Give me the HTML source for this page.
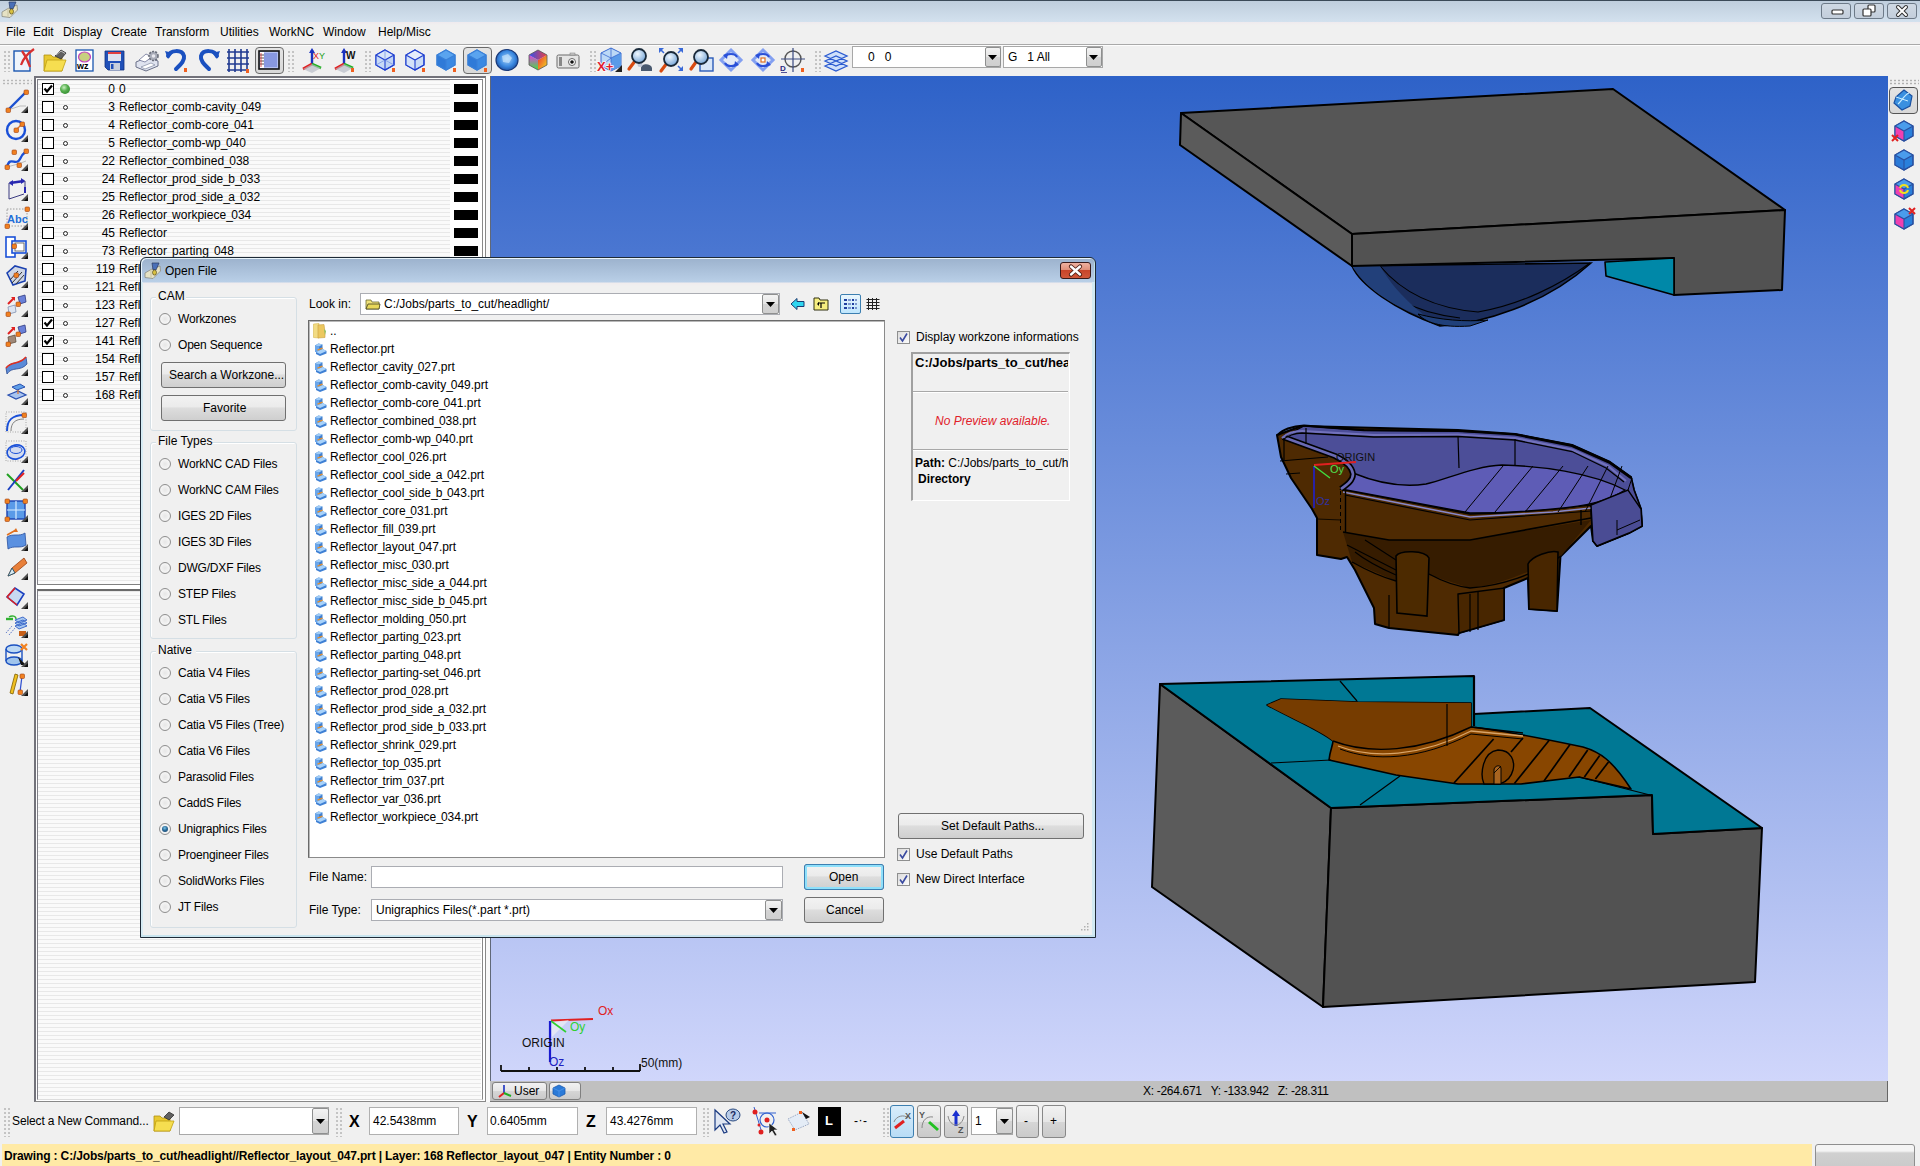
<!DOCTYPE html><html><head><meta charset="utf-8"><style>
*{margin:0;padding:0;box-sizing:border-box}
html,body{width:1920px;height:1166px;overflow:hidden;background:#f0f0f0;font-family:"Liberation Sans",sans-serif;font-size:12px;color:#000}
div{position:absolute}
.t{white-space:pre;line-height:14px;font-size:12px}
.b{font-weight:bold}
svg{position:absolute;overflow:visible}

.stripe{background:repeating-linear-gradient(#e8e8e8 0,#e8e8e8 1px,#fafafa 1px,#fafafa 4px)}
.cb{width:12px;height:12px;border:1.5px solid #000;background:#fff}

.btn{border:1px solid #707070;border-radius:3px;background:linear-gradient(#f2f2f2 0%,#ebebeb 45%,#dddddd 50%,#cfcfcf 100%);}
.inp{background:#fff;border:1px solid #abadb3;border-top-color:#abadb3}
.rad{width:13px;height:13px;border-radius:50%;border:1px solid #8f8f8f;background:radial-gradient(circle at 50% 50%,#e6e6e6 0,#f4f4f4 60%,#dcdcdc 100%)}
.grp{border:1px solid #d5dfe5;border-radius:3px;box-shadow:inset 1px 1px 0 #fff}
.chk{width:13px;height:13px;border:1px solid #8e8f8f;background:linear-gradient(135deg,#dcdcdc,#fbfbfb)}
</style></head><body><div style="left:0px;top:0px;width:1920px;height:1px;background:#3b4a58"></div>
<div style="left:0px;top:1px;width:1920px;height:21px;background:linear-gradient(#bfcedd,#d3e1ee)"></div>
<div style="left:0px;top:22px;width:1920px;height:3px;background:linear-gradient(#efeaee,#f0f0f0)"></div>
<div style="left:1821px;top:3px;width:30px;height:16px;border:1px solid #6d7a88;border-radius:3px;background:linear-gradient(#cfd9e4,#c3cedb)"></div>
<div style="left:1854px;top:3px;width:30px;height:16px;border:1px solid #6d7a88;border-radius:3px;background:linear-gradient(#cfd9e4,#c3cedb)"></div>
<div style="left:1887px;top:3px;width:30px;height:16px;border:1px solid #6d7a88;border-radius:3px;background:linear-gradient(#cfd9e4,#c3cedb)"></div>
<svg style="left:0;top:0" width="1920" height="22"><rect x="1832" y="10" width="11" height="4" rx="1" fill="#fff" stroke="#333" stroke-width="1.2"/><rect x="1868" y="5" width="7" height="7" rx="1" fill="#fff" stroke="#333" stroke-width="1.2"/><rect x="1863" y="9" width="8" height="7" rx="1" fill="#fff" stroke="#333" stroke-width="1.2"/><path d="M1898 7 L1906 15 M1906 7 L1898 15" stroke="#333" stroke-width="4" stroke-linecap="round"/><path d="M1898 7 L1906 15 M1906 7 L1898 15" stroke="#fff" stroke-width="2" stroke-linecap="round"/></svg>
<svg style="left:0px;top:0px" width="20" height="20"><path d="M2 12 L8 8.5 L17 5 L17.5 10 L10 17.5 L2 16.5Z" fill="#e6e2c4" stroke="#8a8a80" stroke-width="0.8"/><path d="M8 8.5 L8 16.5" stroke="#c8c2a0" stroke-width="1"/><path d="M9 2 L16 2 L13 9 L12 8.5 L10 9Z" fill="#4a70b8" stroke="#2a3a60" stroke-width="0.7"/><ellipse cx="11.5" cy="11.5" rx="2" ry="2.6" fill="#d8c040" stroke="#403810" stroke-width="0.6"/></svg>
<div class="t" style="left:6px;top:25px;">File</div>
<div class="t" style="left:33px;top:25px;">Edit</div>
<div class="t" style="left:63px;top:25px;">Display</div>
<div class="t" style="left:111px;top:25px;">Create</div>
<div class="t" style="left:155px;top:25px;">Transform</div>
<div class="t" style="left:220px;top:25px;">Utilities</div>
<div class="t" style="left:269px;top:25px;">WorkNC</div>
<div class="t" style="left:323px;top:25px;">Window</div>
<div class="t" style="left:378px;top:25px;">Help/Misc</div>
<div style="left:0px;top:44px;width:1920px;height:1px;background:#a9a9a9"></div>
<div style="left:0px;top:45px;width:1920px;height:1px;background:#fdfdfd"></div>
<div style="left:2px;top:1144px;width:1810px;height:22px;background:#ffeaa6"></div>
<div class="t b" style="left:4px;top:1149px;letter-spacing:-0.14px">Drawing : C:/Jobs/parts_to_cut/headlight//Reflector_layout_047.prt | Layer: 168 Reflector_layout_047 | Entity Number : 0</div>
<div style="left:1815px;top:1144px;width:100px;height:30px;border:1px solid #8e8e8e;border-radius:3px;background:linear-gradient(#f4f4f4 0,#f4f4f4 6px,#d0d0d0 8px,#c8c8c8)"></div>
<div style="left:3px;top:50px;width:8px;height:22px;background:radial-gradient(circle,#b4b4b4 0.6px,transparent 1px) 0 0/4px 4px"></div>
<div style="left:287px;top:50px;width:8px;height:22px;background:radial-gradient(circle,#b4b4b4 0.6px,transparent 1px) 0 0/4px 4px"></div>
<div style="left:364px;top:50px;width:8px;height:22px;background:radial-gradient(circle,#b4b4b4 0.6px,transparent 1px) 0 0/4px 4px"></div>
<div style="left:589px;top:50px;width:8px;height:22px;background:radial-gradient(circle,#b4b4b4 0.6px,transparent 1px) 0 0/4px 4px"></div>
<div style="left:814px;top:50px;width:8px;height:22px;background:radial-gradient(circle,#b4b4b4 0.6px,transparent 1px) 0 0/4px 4px"></div>
<div style="left:255px;top:47px;width:29px;height:27px;border:1px solid #6a6a6a;border-radius:4px;background:linear-gradient(#e4e4e4,#d8d8d8)"></div>
<div style="left:463px;top:47px;width:29px;height:27px;border:1px solid #6a6a6a;border-radius:4px;background:linear-gradient(#e4e4e4,#d8d8d8)"></div>
<svg style="left:11.0px;top:47.0px" width="26" height="26"><rect x="3" y="4" width="16" height="20" fill="#eef4fb" stroke="#1a56b0" stroke-width="1.4"/><path d="M10 18 C12 12, 16 7, 23 2 M11 4 C14 8, 17 13, 19 20" stroke="#d83030" stroke-width="2.2" fill="none"/></svg>
<svg style="left:42.0px;top:48.0px" width="26" height="26"><path d="M2 7 L9 7 L11 9 L20 9 L20 23 L2 23Z" fill="#e8c830" stroke="#b09010" stroke-width="0.8"/><path d="M5 12 L24 12 L20 23 L2 23Z" fill="#f6de50" stroke="#c0a010" stroke-width="0.8"/><path d="M13 8 L19 2 L24 5 L19 11Z" fill="#606060" stroke="#303030" stroke-width="0.8"/><path d="M14 7 L19 3 L23 5.5" stroke="#c0c0c0" stroke-width="1" fill="none"/></svg>
<svg style="left:72.0px;top:47.0px" width="26" height="26"><rect x="4" y="3" width="17" height="21" fill="#fff" stroke="#1a56b0" stroke-width="1.3"/><ellipse cx="12.5" cy="10" rx="6" ry="5" fill="#c8d080" stroke="#c040c0" stroke-width="1.2"/><text x="5" y="22" font-family="Liberation Sans" font-weight="bold" font-size="9" fill="#000">wz</text></svg>
<svg style="left:102.0px;top:47.0px" width="26" height="26"><path d="M3 4 L22 4 L22 23 L6 23 L3 20Z" fill="#2050b8" stroke="#103080" stroke-width="0.8"/><rect x="6" y="5" width="13" height="9" fill="#dde2ee"/><rect x="6" y="5" width="13" height="2" fill="#e04040"/><rect x="8" y="16" width="10" height="7" fill="#c8d0dc"/><rect x="9" y="17" width="2.5" height="5" fill="#2050b8"/></svg>
<svg style="left:134.0px;top:48.0px" width="26" height="26"><path d="M2 14 L14 9 L24 13 L24 18 L12 23 L2 19Z" fill="#dfe3ef" stroke="#6a7088" stroke-width="1"/><path d="M5 12 L12 6 L18 9 L11 14Z" fill="#fff" stroke="#7a80a0" stroke-width="0.9"/><circle cx="19.5" cy="8" r="4.5" fill="#a8acb8" stroke="#6a6e7a" stroke-width="1.6" stroke-dasharray="2 1.2"/><circle cx="19.5" cy="8" r="1.8" fill="#e8e8ee"/><path d="M7 19 L17 15 L21 17 L11 21Z" fill="#fff" stroke="#8088a0" stroke-width="0.7"/></svg>
<svg style="left:164.0px;top:47.0px" width="26" height="26"><path d="M4 9 C6 3, 18 2, 20 9 C21 14, 16 18, 12 22" stroke="#1a50c0" stroke-width="4" fill="none" stroke-linecap="round"/><path d="M1 4 L9 6 L4 12Z" fill="#1a50c0"/><rect x="20" y="21" width="3" height="4" fill="#f06020"/></svg>
<svg style="left:195.0px;top:47.0px" width="26" height="26"><path d="M22 9 C20 3, 8 2, 6 9 C5 14, 10 18, 14 22" stroke="#1a50c0" stroke-width="4" fill="none" stroke-linecap="round"/><path d="M25 4 L17 6 L22 12Z" fill="#1a50c0"/></svg>
<svg style="left:225.0px;top:47.0px" width="26" height="26"><path d="M2 5 H24 M2 11 H24 M2 17 H24 M2 23 H24 M4 2 V25 M10 2 V25 M16 2 V25 M22 2 V25" stroke="#203a90" stroke-width="1.6"/><rect x="21" y="22" width="3" height="4" fill="#f06020"/></svg>
<svg style="left:256.0px;top:47.0px" width="26" height="26"><rect x="3" y="4" width="20" height="18" fill="#b4c0f0" stroke="#111" stroke-width="1.6"/><rect x="8" y="6" width="13" height="14" fill="#8898e0"/><rect x="4" y="5" width="4" height="16" fill="#fff"/><path d="M4 8 H8 M4 11 H8 M4 14 H8 M4 17 H8" stroke="#222" stroke-width="0.8"/><path d="M5 6 V20" stroke="#e03030" stroke-width="0.8"/></svg>
<svg style="left:299.0px;top:47.0px" width="26" height="26"><path d="M13 17 L13 3" stroke="#1a30c0" stroke-width="2.4"/><path d="M13 1 L10 6 L16 6Z" fill="#1a30c0"/><path d="M13 17 L4 22" stroke="#e02020" stroke-width="2.6"/><path d="M13 17 L22 21" stroke="#20b020" stroke-width="2.6"/><path d="M4 22 L13 26 L22 21 L13 17Z" fill="#b8bcc8" opacity="0.7"/><text x="14" y="12" font-family="Liberation Sans" font-size="9" fill="#e02020">X</text><text x="20" y="12" font-family="Liberation Sans" font-size="9" fill="#20a020">Y</text></svg>
<svg style="left:331.0px;top:47.0px" width="26" height="26"><path d="M13 17 L13 3" stroke="#1a30c0" stroke-width="2.4"/><path d="M13 1 L10 6 L16 6Z" fill="#1a30c0"/><path d="M13 17 L4 22" stroke="#e02020" stroke-width="2.6"/><path d="M13 17 L22 21" stroke="#20b020" stroke-width="2.6"/><path d="M4 22 L13 26 L22 21 L13 17Z" fill="#b8bcc8" opacity="0.7"/><text x="15" y="12" font-family="Liberation Sans" font-weight="bold" font-size="10" fill="#111">W</text><rect x="20" y="21" width="3" height="4" fill="#f06020"/></svg>
<svg style="left:372.0px;top:47.0px" width="26" height="26"><path d="M13 3 L22 8 L22 18 L13 23 L4 18 L4 8Z" fill="#c0d4f4" stroke="#2040d0" stroke-width="1.2"/><path d="M13 3 L22 8 L13 13 L4 8Z" fill="#d8e6fa"/><path d="M4 8 L13 13 L13 23 L4 18Z" fill="#c8daf6"/><path d="M13 3 L22 8 L22 18 L13 23 L4 18 L4 8Z M4 8 L13 13 L22 8 M13 13 L13 23" fill="none" stroke="#2040d0" stroke-width="1.1"/><path d="M13 13 L13 3 M4 18 L13 13 M22 18 L13 13" stroke="#6080e0" stroke-width="0.6"/><rect x="20" y="21" width="3" height="4" fill="#f06020"/></svg>
<svg style="left:402.0px;top:47.0px" width="26" height="26"><path d="M13 3 L22 8 L22 18 L13 23 L4 18 L4 8Z" fill="#cadcf6" stroke="#2040d0" stroke-width="1.2"/><path d="M13 3 L22 8 L13 13 L4 8Z" fill="#e6eefb"/><path d="M4 8 L13 13 L13 23 L4 18Z" fill="#d4e2f8"/><path d="M13 3 L22 8 L22 18 L13 23 L4 18 L4 8Z M4 8 L13 13 L22 8 M13 13 L13 23" fill="none" stroke="#2040d0" stroke-width="1.1"/><rect x="20" y="21" width="3" height="4" fill="#f06020"/></svg>
<svg style="left:433.0px;top:47.0px" width="26" height="26"><path d="M13 3 L22 8 L22 18 L13 23 L4 18 L4 8Z" fill="#3a88e2" stroke="#3a80d8" stroke-width="1.2"/><path d="M13 3 L22 8 L13 13 L4 8Z" fill="#5aa4ef"/><path d="M4 8 L13 13 L13 23 L4 18Z" fill="#2f7ad8"/><path d="M13 3 L22 8 L22 18 L13 23 L4 18 L4 8Z M4 8 L13 13 L22 8 M13 13 L13 23" fill="none" stroke="#3a80d8" stroke-width="1.1"/><rect x="20" y="21" width="3" height="4" fill="#f06020"/></svg>
<svg style="left:464.0px;top:47.0px" width="26" height="26"><path d="M13 3 L22 8 L22 18 L13 23 L4 18 L4 8Z" fill="#3a88e2" stroke="#3a80d8" stroke-width="1.2"/><path d="M13 3 L22 8 L13 13 L4 8Z" fill="#5aa4ef"/><path d="M4 8 L13 13 L13 23 L4 18Z" fill="#2f7ad8"/><path d="M13 3 L22 8 L22 18 L13 23 L4 18 L4 8Z M4 8 L13 13 L22 8 M13 13 L13 23" fill="none" stroke="#3a80d8" stroke-width="1.1"/><rect x="20" y="21" width="3" height="4" fill="#f06020"/></svg>
<svg style="left:494.0px;top:47.0px" width="26" height="26"><defs><radialGradient id="sg" cx="50%" cy="45%" r="60%"><stop offset="0" stop-color="#a8d4fa"/><stop offset="0.6" stop-color="#3a88e0"/><stop offset="1" stop-color="#1a4a9a"/></radialGradient></defs><ellipse cx="13" cy="13" rx="11" ry="10.5" fill="url(#sg)" stroke="#1a3a7a" stroke-width="1.2"/><path d="M8 9 L14 7 L18 11 L15 16 L9 15Z" fill="#c8e4fc" opacity="0.7"/></svg>
<svg style="left:525.0px;top:47.0px" width="26" height="26"><defs><linearGradient id="cg1" x1="0" y1="0" x2="0" y2="1"><stop offset="0" stop-color="#e040e0"/><stop offset="1" stop-color="#40e040"/></linearGradient><linearGradient id="cg2" x1="0" y1="0" x2="1" y2="1"><stop offset="0" stop-color="#f03030"/><stop offset="1" stop-color="#f0e020"/></linearGradient><linearGradient id="cg3" x1="0" y1="0" x2="1" y2="0"><stop offset="0" stop-color="#3050f0"/><stop offset="1" stop-color="#f04040"/></linearGradient></defs><path d="M13 13 L22 8 L22 18 L13 23Z" fill="url(#cg2)"/><path d="M4 8 L13 13 L13 23 L4 18Z" fill="url(#cg1)"/><path d="M13 3 L22 8 L13 13 L4 8Z" fill="url(#cg3)"/><path d="M13 3 L22 8 L22 18 L13 23 L4 18 L4 8Z" fill="none" stroke="#555" stroke-width="0.8"/></svg>
<svg style="left:555.0px;top:48.0px" width="26" height="26"><rect x="2" y="7" width="22" height="13" rx="1.5" fill="#e4e4e4" stroke="#6a6a6a" stroke-width="1"/><rect x="4" y="9" width="3" height="9" fill="#888"/><circle cx="17" cy="14" r="3.5" fill="#fff" stroke="#666" stroke-width="1"/><circle cx="17" cy="14" r="1.8" fill="#111"/><rect x="15" y="5" width="5" height="2" fill="#ccc" stroke="#777" stroke-width="0.5"/></svg>
<svg style="left:598.0px;top:47.0px" width="26" height="26"><path d="M13 1 L23 6 L23 19 L13 24 L3 19 L3 6Z" fill="#bcd8f6" stroke="#3a6ad0" stroke-width="1"/><path d="M13 11 L23 6 L23 19 L13 24Z" fill="#5a9ae8"/><path d="M3 6 L13 11 L23 6 M13 11 V24 M13 1 V11 M3 19 L13 11" stroke="#3a6ad0" stroke-width="0.8" fill="none"/><path d="M17 25 L24 25 L24 18Z" fill="#222"/><text x="-1" y="24" font-family="Liberation Sans" font-weight="bold" font-size="13" fill="#e02030" stroke="#fff" stroke-width="1.2" paint-order="stroke">X+</text></svg>
<svg style="left:627.0px;top:47.0px" width="26" height="26"><defs><radialGradient id="lg" cx="40%" cy="35%" r="65%"><stop offset="0" stop-color="#f0f8ff"/><stop offset="1" stop-color="#7aa8d8"/></radialGradient></defs><path d="M14 21 C14 16, 24 16, 25 21 L25 24 L14 24Z" fill="#4a5a70"/><circle cx="13" cy="17.5" r="2.5" fill="#c0c8d8"/><path d="M8 14 L2 22" stroke="#d84a10" stroke-width="3.2" stroke-linecap="round"/><circle cx="12" cy="9" r="7" fill="url(#lg)" stroke="#1a2a3a" stroke-width="1.8"/></svg>
<svg style="left:658.0px;top:47.0px" width="26" height="26"><path d="M9 16 L3 24" stroke="#d84a10" stroke-width="3.2" stroke-linecap="round"/><circle cx="13" cy="12" r="7" fill="url(#lg)" stroke="#1a2a3a" stroke-width="1.8"/><path d="M1 1 L6 1 L1 6Z M25 1 L20 1 L25 6Z M25 24 L20 24 L25 19Z" fill="#3a6ad8"/><path d="M2 2 L6 6 M24 2 L20 6 M24 23 L20 19" stroke="#3a6ad8" stroke-width="1.6"/></svg>
<svg style="left:689.0px;top:47.0px" width="26" height="26"><rect x="11" y="11" width="13" height="13" fill="#d8e6f8" stroke="#2a5ab8" stroke-width="1.4"/><path d="M7 15 L2 22" stroke="#d84a10" stroke-width="3.2" stroke-linecap="round"/><circle cx="12" cy="10" r="7" fill="url(#lg)" stroke="#1a2a3a" stroke-width="1.8"/></svg>
<svg style="left:718.0px;top:47.0px" width="26" height="26"><path d="M13 1 L25 13 L13 25 L1 13Z" fill="#dce6fa" opacity="0.6"/><path d="M13 3 L23 13 L13 23 L3 13Z" fill="none" stroke="#5a80f0" stroke-width="3" opacity="0.7"/><path d="M7 10 C9 6, 17 6, 19 10" stroke="#2a50d8" stroke-width="2.2" fill="none"/><path d="M5 8 L10 6 L9 12Z" fill="#2a50d8"/><path d="M19 16 C17 20, 9 20, 7 16" stroke="#2a50d8" stroke-width="2.2" fill="none"/><path d="M21 18 L16 20 L17 14Z" fill="#2a50d8"/></svg>
<svg style="left:750.0px;top:47.0px" width="26" height="26"><path d="M13 1 L25 13 L13 25 L1 13Z" fill="#dce6fa" opacity="0.6"/><path d="M13 3 L23 13 L13 23 L3 13Z" fill="none" stroke="#5a80f0" stroke-width="3" opacity="0.7"/><path d="M7 10 C9 6, 17 6, 19 10" stroke="#2a50d8" stroke-width="2.2" fill="none"/><path d="M5 8 L10 6 L9 12Z" fill="#2a50d8"/><path d="M19 16 C17 20, 9 20, 7 16" stroke="#2a50d8" stroke-width="2.2" fill="none"/><path d="M21 18 L16 20 L17 14Z" fill="#2a50d8"/><rect x="11" y="11" width="4" height="4" fill="#fff" stroke="#e07020" stroke-width="1.2"/></svg>
<svg style="left:780.0px;top:47.0px" width="26" height="26"><circle cx="13" cy="12" r="8" fill="none" stroke="#555" stroke-width="1.4"/><path d="M13 1 V25 M1 12 H25" stroke="#3a4a80" stroke-width="1.2"/><text x="0" y="24" font-family="Liberation Sans" font-weight="bold" font-size="8" fill="#2a2a80">D</text><path d="M1 25.5 H7" stroke="#2a2a80" stroke-width="0.8"/><rect x="21" y="21" width="3" height="4" fill="#f06020"/></svg>
<svg style="left:823.0px;top:48.0px" width="26" height="26"><path d="M2 8 L13 3 L24 8 L13 13Z M2 13 L13 8 L24 13 L13 18Z M2 18 L13 13 L24 18 L13 23Z" fill="#cfe0fa" stroke="#2a5ad0" stroke-width="1.3"/></svg>
<div style="left:852px;top:46px;width:149px;height:22px;border:1px solid #a8a8a8;background:#fff"></div>
<div style="left:985px;top:47px;width:16px;height:20px;border:1px solid #8e8f8f;border-radius:2px;background:linear-gradient(#f3f3f3,#e4e4e4 50%,#d4d4d4 51%,#cfcfcf)"></div>
<svg style="left:988px;top:55px" width="9" height="5"><path d="M0 0 L9 0 L4.5 5Z" fill="#000"/></svg>
<div class="t" style="left:868px;top:50px;">0   0</div>
<div style="left:1003px;top:46px;width:100px;height:22px;border:1px solid #a8a8a8;background:#fff"></div>
<div style="left:1086px;top:47px;width:16px;height:20px;border:1px solid #8e8f8f;border-radius:2px;background:linear-gradient(#f3f3f3,#e4e4e4 50%,#d4d4d4 51%,#cfcfcf)"></div>
<svg style="left:1089px;top:55px" width="9" height="5"><path d="M0 0 L9 0 L4.5 5Z" fill="#000"/></svg>
<div class="t" style="left:1008px;top:50px;">G   1 All</div>
<div style="left:1889px;top:79px;width:30px;height:6px;background:radial-gradient(circle,#b0b0b0 0.8px,transparent 1.2px) 0 0/4px 3px"></div>
<div style="left:1889px;top:87px;width:29px;height:27px;border:1px solid #555;border-radius:4px;background:linear-gradient(#e4e4e4,#d8d8d8)"></div>
<svg style="left:1890.0px;top:87.0px" width="26" height="26"><path d="M6 10 L14 3 L22 9 L20 19 L12 23 L4 16Z" fill="#3a90e0" stroke="#1a50a0" stroke-width="1.2"/><path d="M8 17 C12 14, 14 8, 19 6" stroke="#c8ecff" stroke-width="1.2" fill="none"/><path d="M6 10 L18 14" stroke="#c8ecff" stroke-width="1" fill="none"/></svg>
<svg style="left:1891.0px;top:118.0px" width="26" height="26"><path d="M13 3 L22 8 L22 18 L13 23 L4 18 L4 8Z" fill="#2a80dc" stroke="#2a50a0" stroke-width="1.2"/><path d="M13 3 L22 8 L13 13 L4 8Z" fill="#4a9cec"/><path d="M4 8 L13 13 L13 23 L4 18Z" fill="#f040b0"/><path d="M13 3 L22 8 L22 18 L13 23 L4 18 L4 8Z M4 8 L13 13 L22 8 M13 13 L13 23" fill="none" stroke="#2a50a0" stroke-width="1.1"/><path d="M1 17 L7 23 M7 17 L1 23" stroke="#e02020" stroke-width="2"/></svg>
<svg style="left:1891.0px;top:147.0px" width="26" height="26"><path d="M13 3 L22 8 L22 18 L13 23 L4 18 L4 8Z" fill="#2a80dc" stroke="#2a50a0" stroke-width="1.2"/><path d="M13 3 L22 8 L13 13 L4 8Z" fill="#4a9cec"/><path d="M4 8 L13 13 L13 23 L4 18Z" fill="#2a7ad8"/><path d="M13 3 L22 8 L22 18 L13 23 L4 18 L4 8Z M4 8 L13 13 L22 8 M13 13 L13 23" fill="none" stroke="#2a50a0" stroke-width="1.1"/></svg>
<svg style="left:1891.0px;top:176.0px" width="26" height="26"><path d="M13 3 L22 8 L22 18 L13 23 L4 18 L4 8Z" fill="#2a80dc" stroke="#2a50a0" stroke-width="1.2"/><path d="M13 3 L22 8 L13 13 L4 8Z" fill="#4a9cec"/><path d="M4 8 L13 13 L13 23 L4 18Z" fill="#f040b0"/><path d="M13 3 L22 8 L22 18 L13 23 L4 18 L4 8Z M4 8 L13 13 L22 8 M13 13 L13 23" fill="none" stroke="#2a50a0" stroke-width="1.1"/><path d="M9 12 C10 8, 16 8, 17 12 M17 14 C16 18, 10 18, 9 14" stroke="#f0e020" stroke-width="2" fill="none"/></svg>
<svg style="left:1891.0px;top:206.0px" width="26" height="26"><path d="M13 3 L22 8 L22 18 L13 23 L4 18 L4 8Z" fill="#2a80dc" stroke="#2a50a0" stroke-width="1.2"/><path d="M13 3 L22 8 L13 13 L4 8Z" fill="#4a9cec"/><path d="M4 8 L13 13 L13 23 L4 18Z" fill="#f040b0"/><path d="M13 3 L22 8 L22 18 L13 23 L4 18 L4 8Z M4 8 L13 13 L22 8 M13 13 L13 23" fill="none" stroke="#2a50a0" stroke-width="1.1"/><path d="M18 2 L24 8 M24 2 L18 8" stroke="#e02020" stroke-width="2"/></svg>
<div style="left:2px;top:79px;width:30px;height:6px;background:radial-gradient(circle,#b8b8b8 0.8px,transparent 1.2px) 0 0/4px 3px"></div>
<svg style="left:4px;top:88.5px" width="26" height="24"><path d="M4 21 L16 17 L22 17" stroke="#999" stroke-width="0.6" fill="none"/><path d="M4 21 L22 3" stroke="#1a50d0" stroke-width="2.4"/><rect x="2" y="19" width="4.5" height="4.5" rx="1" fill="#f08020" stroke="#a04010" stroke-width="0.6"/><rect x="20" y="1" width="4.5" height="4.5" rx="1" fill="#f08020" stroke="#a04010" stroke-width="0.6"/><path d="M17 24 L24 17 L24 24Z" fill="#505050"/><path d="M20 24 L24 20 L24 24Z" fill="#111"/></svg><svg style="left:4px;top:117.5px" width="26" height="24"><circle cx="12" cy="12" r="9" stroke="#1a50d8" stroke-width="2.4" fill="none"/><path d="M12 12 L18 6" stroke="#e07020" stroke-width="1.2"/><rect x="10" y="10" width="4.5" height="4.5" rx="1" fill="#f08020" stroke="#a04010" stroke-width="0.6"/><rect x="16" y="4" width="4.5" height="4.5" rx="1" fill="#f08020" stroke="#a04010" stroke-width="0.6"/><path d="M17 24 L24 17 L24 24Z" fill="#505050"/><path d="M20 24 L24 20 L24 24Z" fill="#111"/></svg><svg style="left:4px;top:147.0px" width="26" height="24"><path d="M3 20 C6 8, 12 20, 16 12 S 22 6, 22 4" stroke="#1a50d8" stroke-width="2.4" fill="none"/><path d="M3 20 L14 17 L22 14" stroke="#999" stroke-width="0.6" fill="none"/><rect x="1" y="18" width="4.5" height="4.5" rx="1" fill="#f08020" stroke="#a04010" stroke-width="0.6"/><rect x="8" y="3" width="4.5" height="4.5" rx="1" fill="#f08020" stroke="#a04010" stroke-width="0.6"/><rect x="20" y="2" width="4.5" height="4.5" rx="1" fill="#f08020" stroke="#a04010" stroke-width="0.6"/><rect x="13" y="16" width="4.5" height="4.5" rx="1" fill="#f08020" stroke="#a04010" stroke-width="0.6"/><path d="M17 24 L24 17 L24 24Z" fill="#505050"/><path d="M20 24 L24 20 L24 24Z" fill="#111"/></svg><svg style="left:4px;top:176.5px" width="26" height="24"><path d="M5 6 L21 4 M5 6 L5 22 M21 4 L21 16 M5 22 L20 17" stroke="#3a3a80" stroke-width="1" fill="none"/><path d="M6 6 L20 4" stroke="#2828b0" stroke-width="2.4"/><path d="M5 6 L9 3 L9 9Z M21 4 L17 1 L17 7Z" fill="#2828b0"/><path d="M21 10 L21 16" stroke="#2828b0" stroke-width="2"/><path d="M17 24 L24 17 L24 24Z" fill="#505050"/><path d="M20 24 L24 20 L24 24Z" fill="#111"/></svg><svg style="left:4px;top:206.0px" width="26" height="24"><rect x="3" y="3" width="20" height="17" fill="none" stroke="#888" stroke-width="0.8" stroke-dasharray="1.5 1.5"/><text x="3" y="17" font-family="Liberation Sans" font-weight="bold" font-size="11" fill="#1e6ed8">Abc</text><rect x="1" y="18" width="4.5" height="4.5" rx="1" fill="#f08020" stroke="#a04010" stroke-width="0.6"/><rect x="21" y="1" width="4.5" height="4.5" rx="1" fill="#f08020" stroke="#a04010" stroke-width="0.6"/><path d="M17 24 L24 17 L24 24Z" fill="#505050"/><path d="M20 24 L24 20 L24 24Z" fill="#111"/></svg><svg style="left:4px;top:235.0px" width="26" height="24"><rect x="2" y="2" width="9" height="20" fill="#fff" stroke="#1a50d8" stroke-width="1.6"/><rect x="8" y="6" width="14" height="12" fill="#e8eef8" stroke="#1a50d8" stroke-width="1.6"/><rect x="11" y="8" width="9" height="8" fill="#fff" stroke="#555" stroke-width="0.8"/><rect x="8" y="9" width="4.5" height="4.5" rx="1" fill="#f08020" stroke="#a04010" stroke-width="0.6"/><path d="M17 24 L24 17 L24 24Z" fill="#505050"/><path d="M20 24 L24 20 L24 24Z" fill="#111"/></svg><svg style="left:4px;top:264.0px" width="26" height="24"><path d="M3 9 L11 2 L22 5 L21 17 L9 21 Z" fill="#cfd6e4" stroke="#1a40b0" stroke-width="1.6"/><path d="M6 16 L14 7 M8 19 L18 8 M12 20 L20 11" stroke="#333" stroke-width="1"/><rect x="10" y="9" width="4.5" height="4.5" rx="1" fill="#f08020" stroke="#a04010" stroke-width="0.6"/><path d="M17 24 L24 17 L24 24Z" fill="#505050"/><path d="M20 24 L24 20 L24 24Z" fill="#111"/></svg><svg style="left:4px;top:293.0px" width="26" height="24"><path d="M14 4 L21 2 L22 9 L16 11Z" fill="#6a80d8" stroke="#303a80" stroke-width="0.8"/><path d="M4 14 L11 12 L12 19 L5 21Z" fill="#dde4f0" stroke="#8090b0" stroke-width="0.8"/><path d="M4 11 L10 5" stroke="#e02020" stroke-width="2"/><path d="M11 4 L7 4 L11 8Z" fill="#e02020"/><rect x="2" y="19" width="4.5" height="4.5" rx="1" fill="#f08020" stroke="#a04010" stroke-width="0.6"/><rect x="12" y="9" width="4.5" height="4.5" rx="1" fill="#f08020" stroke="#a04010" stroke-width="0.6"/><path d="M17 24 L24 17 L24 24Z" fill="#505050"/><path d="M20 24 L24 20 L24 24Z" fill="#111"/></svg><svg style="left:4px;top:322.5px" width="26" height="24"><path d="M14 4 L21 2 L22 9 L16 11Z" fill="#6a80d8" stroke="#303a80" stroke-width="0.8"/><path d="M4 14 L11 12 L12 19 L5 21Z" fill="#a08878" stroke="#605040" stroke-width="0.8"/><path d="M4 11 L10 5" stroke="#e02020" stroke-width="2"/><path d="M11 4 L7 4 L11 8Z" fill="#e02020"/><rect x="2" y="19" width="4.5" height="4.5" rx="1" fill="#f08020" stroke="#a04010" stroke-width="0.6"/><rect x="12" y="9" width="4.5" height="4.5" rx="1" fill="#f08020" stroke="#a04010" stroke-width="0.6"/><path d="M17 24 L24 17 L24 24Z" fill="#505050"/><path d="M20 24 L24 20 L24 24Z" fill="#111"/></svg><svg style="left:4px;top:352.0px" width="26" height="24"><path d="M2 16 C8 8, 14 14, 22 5 L23 12 C16 20, 8 14, 3 22Z" fill="#5a8ad8" stroke="#2a4a90" stroke-width="0.8"/><path d="M2 16 C8 8, 14 14, 22 5" stroke="#e03020" stroke-width="1.6" fill="none"/><path d="M17 24 L24 17 L24 24Z" fill="#505050"/><path d="M20 24 L24 20 L24 24Z" fill="#111"/></svg><svg style="left:4px;top:381.0px" width="26" height="24"><path d="M4 14 L14 10 L22 14 L12 18Z" fill="#a8c4f0" stroke="#2a50b0" stroke-width="1.2"/><path d="M8 6 L16 3 L21 6 L13 9Z" fill="#60a0e8" stroke="#2a50b0" stroke-width="1"/><path d="M14 9 L14 13" stroke="#e07020" stroke-width="1.2"/><path d="M17 24 L24 17 L24 24Z" fill="#505050"/><path d="M20 24 L24 20 L24 24Z" fill="#111"/></svg><svg style="left:4px;top:410.0px" width="26" height="24"><path d="M3 21 C3 10, 8 5, 20 5" stroke="#1a50d8" stroke-width="2" fill="none"/><path d="M7 21 C7 13, 11 9, 20 9" stroke="#666" stroke-width="0.8" fill="none"/><rect x="2" y="2" width="20" height="20" fill="none" stroke="#777" stroke-width="0.6" stroke-dasharray="1 1.5"/><rect x="18" y="3" width="4.5" height="4.5" rx="1" fill="#f08020" stroke="#a04010" stroke-width="0.6"/><path d="M17 24 L24 17 L24 24Z" fill="#505050"/><path d="M20 24 L24 20 L24 24Z" fill="#111"/></svg><svg style="left:4px;top:439.0px" width="26" height="24"><ellipse cx="12" cy="13" rx="9" ry="7" fill="#d4dcf0" stroke="#1a50d8" stroke-width="1.6" transform="rotate(-10 12 13)"/><ellipse cx="12" cy="11" rx="6" ry="3.5" fill="none" stroke="#1a50d8" stroke-width="1"/><rect x="2" y="2" width="20" height="20" fill="none" stroke="#777" stroke-width="0.6" stroke-dasharray="1 1.5"/><path d="M17 24 L24 17 L24 24Z" fill="#505050"/><path d="M20 24 L24 20 L24 24Z" fill="#111"/></svg><svg style="left:4px;top:468.0px" width="26" height="24"><path d="M3 6 L19 22" stroke="#20a020" stroke-width="2"/><path d="M4 22 L20 2" stroke="#1a40c0" stroke-width="2"/><path d="M12 13 L20 5" stroke="#e02020" stroke-width="2"/><path d="M17 24 L24 17 L24 24Z" fill="#505050"/><path d="M20 24 L24 20 L24 24Z" fill="#111"/></svg><svg style="left:4px;top:497.5px" width="26" height="24"><rect x="3" y="3" width="18" height="18" fill="#5a9ae8" stroke="#1a40b0" stroke-width="1.4"/><path d="M12 3 V21 M3 12 H21" stroke="#d8ecff" stroke-width="1.2"/><rect x="1" y="1" width="4.5" height="4.5" rx="1" fill="#f08020" stroke="#a04010" stroke-width="0.6"/><rect x="19" y="1" width="4.5" height="4.5" rx="1" fill="#f08020" stroke="#a04010" stroke-width="0.6"/><rect x="1" y="19" width="4.5" height="4.5" rx="1" fill="#f08020" stroke="#a04010" stroke-width="0.6"/><path d="M17 24 L24 17 L24 24Z" fill="#505050"/><path d="M20 24 L24 20 L24 24Z" fill="#111"/></svg><svg style="left:4px;top:527.0px" width="26" height="24"><path d="M3 10 C9 6, 15 10, 21 6 L22 18 C16 22, 10 18, 4 22Z" fill="#5a90e0" stroke="#2a50a0" stroke-width="0.8"/><path d="M3 8 L12 3" stroke="#e07020" stroke-width="1.6"/><path d="M12 1 L14 5 L9 5Z" fill="#e07020"/><path d="M17 24 L24 17 L24 24Z" fill="#505050"/><path d="M20 24 L24 20 L24 24Z" fill="#111"/></svg><svg style="left:4px;top:556.0px" width="26" height="24"><path d="M4 20 L8 12 L20 2 L23 7 L11 17 Z" fill="#e8803a" stroke="#9a4010" stroke-width="0.8"/><path d="M4 20 L8 12 L11 17Z" fill="#d8e8f0" stroke="#305a70" stroke-width="1"/><path d="M17 24 L24 17 L24 24Z" fill="#505050"/><path d="M20 24 L24 20 L24 24Z" fill="#111"/></svg><svg style="left:4px;top:585.0px" width="26" height="24"><path d="M3 12 L11 3 L20 9 L13 20 Z" fill="#c8daf0" stroke="#1a40c0" stroke-width="1.6"/><path d="M3 12 L11 3 M13 20 L3 12" stroke="#e02020" stroke-width="1.6"/><path d="M17 24 L24 17 L24 24Z" fill="#505050"/><path d="M20 24 L24 20 L24 24Z" fill="#111"/></svg><svg style="left:4px;top:614.0px" width="26" height="24"><path d="M2 5 L9 5" stroke="#30b030" stroke-width="2.4"/><path d="M5 3 C8 1, 12 2, 12 5" stroke="#30b030" stroke-width="1.4" fill="none"/><path d="M11 6 L19 3 L23 6 L15 9Z M11 9 L19 6 L23 9 L15 12Z M11 12 L19 9 L23 12 L15 15Z" fill="#a8c8f0" stroke="#2050c0" stroke-width="0.8"/><path d="M2 19 L8 12 M5 21 L11 14" stroke="#4060c0" stroke-width="0.8" stroke-dasharray="1.5 1"/><rect x="15" y="17" width="7" height="5" fill="#c86018"/><path d="M17 24 L24 17 L24 24Z" fill="#505050"/><path d="M20 24 L24 20 L24 24Z" fill="#111"/></svg><svg style="left:4px;top:643.0px" width="26" height="24"><ellipse cx="10" cy="6" rx="8" ry="4" fill="#bcd8f4" stroke="#1a50c0" stroke-width="1.4"/><path d="M2 6 L2 18 M18 6 L18 18" stroke="#1a50c0" stroke-width="1.4"/><ellipse cx="10" cy="18" rx="8" ry="4" fill="#a0c4ec" stroke="#1a50c0" stroke-width="1.4"/><path d="M17 1 L23 7 M23 1 L17 7" stroke="#f08020" stroke-width="2.2"/><path d="M14 14 L22 22 L17 22Z" fill="#111"/><path d="M17 24 L24 17 L24 24Z" fill="#505050"/><path d="M20 24 L24 20 L24 24Z" fill="#111"/></svg><svg style="left:4px;top:672.0px" width="26" height="24"><path d="M6 21 L11 2 L14 3 L9 22Z" fill="#f0c020" stroke="#806000" stroke-width="0.8"/><path d="M18 4 L16 20" stroke="#3050d0" stroke-width="1.2"/><rect x="16" y="2" width="4.5" height="4.5" rx="1" fill="#f08020" stroke="#a04010" stroke-width="0.6"/><rect x="14" y="18" width="4.5" height="4.5" rx="1" fill="#f08020" stroke="#a04010" stroke-width="0.6"/><path d="M17 24 L24 17 L24 24Z" fill="#505050"/><path d="M20 24 L24 20 L24 24Z" fill="#111"/></svg>
<div style="left:34px;top:76px;width:452px;height:1026px;border-left:2px solid #72727a;border-top:2px solid #72727a;border-right:1px solid #888;border-bottom:1px solid #888;background:#fff"></div>
<div style="left:486px;top:76px;width:4px;height:1026px;background:#f8f8f8"></div>
<div class="stripe" style="left:37px;top:79px;width:446px;height:506px;border-left:1px solid #808088;border-top:1px solid #808088;border-bottom:1px solid #808080;border-right:1px solid #888"></div>
<div style="left:450px;top:80px;width:32px;height:504px;background:#fff"></div>
<div style="left:481px;top:80px;width:1px;height:504px;background:#fff"></div>
<div class="stripe" style="left:37px;top:589px;width:446px;height:511px;border-left:1px solid #808088;border-top:2px solid #6a6a6a;border-bottom:1px solid #ddd;border-right:1px solid #888"></div>
<div style="left:481px;top:591px;width:1px;height:508px;background:#fff"></div>
<div class="cb" style="left:42px;top:83px;width:12px;height:12px;"></div>
<svg style="left:42px;top:83px" width="12" height="12"><path d="M2.5 5.5 L5 8.5 L10 2.5" stroke="#000" stroke-width="2.2" fill="none"/></svg>
<div style="left:60px;top:84px;width:10px;height:10px;border-radius:50%;background:radial-gradient(circle at 40% 35%,#c8f0c0 0,#58b050 40%,#207a20 100%)"></div>
<div class="t" style="left:60px;top:82px;width:55px;text-align:right">0</div>
<div class="t" style="left:119px;top:82px;">0</div>
<div style="left:454px;top:84px;width:24px;height:10px;background:#000"></div>
<div class="cb" style="left:42px;top:101px;width:12px;height:12px;"></div>
<div style="left:63px;top:105px;width:5px;height:5px;border-radius:50%;border:1.2px solid #222"></div>
<div class="t" style="left:60px;top:100px;width:55px;text-align:right">3</div>
<div class="t" style="left:119px;top:100px;">Reflector<span style="letter-spacing:-1.6px">_</span>comb-cavity<span style="letter-spacing:-1.6px">_</span>049</div>
<div style="left:454px;top:102px;width:24px;height:10px;background:#000"></div>
<div class="cb" style="left:42px;top:119px;width:12px;height:12px;"></div>
<div style="left:63px;top:123px;width:5px;height:5px;border-radius:50%;border:1.2px solid #222"></div>
<div class="t" style="left:60px;top:118px;width:55px;text-align:right">4</div>
<div class="t" style="left:119px;top:118px;">Reflector<span style="letter-spacing:-1.6px">_</span>comb-core<span style="letter-spacing:-1.6px">_</span>041</div>
<div style="left:454px;top:120px;width:24px;height:10px;background:#000"></div>
<div class="cb" style="left:42px;top:137px;width:12px;height:12px;"></div>
<div style="left:63px;top:141px;width:5px;height:5px;border-radius:50%;border:1.2px solid #222"></div>
<div class="t" style="left:60px;top:136px;width:55px;text-align:right">5</div>
<div class="t" style="left:119px;top:136px;">Reflector<span style="letter-spacing:-1.6px">_</span>comb-wp<span style="letter-spacing:-1.6px">_</span>040</div>
<div style="left:454px;top:138px;width:24px;height:10px;background:#000"></div>
<div class="cb" style="left:42px;top:155px;width:12px;height:12px;"></div>
<div style="left:63px;top:159px;width:5px;height:5px;border-radius:50%;border:1.2px solid #222"></div>
<div class="t" style="left:60px;top:154px;width:55px;text-align:right">22</div>
<div class="t" style="left:119px;top:154px;">Reflector<span style="letter-spacing:-1.6px">_</span>combined<span style="letter-spacing:-1.6px">_</span>038</div>
<div style="left:454px;top:156px;width:24px;height:10px;background:#000"></div>
<div class="cb" style="left:42px;top:173px;width:12px;height:12px;"></div>
<div style="left:63px;top:177px;width:5px;height:5px;border-radius:50%;border:1.2px solid #222"></div>
<div class="t" style="left:60px;top:172px;width:55px;text-align:right">24</div>
<div class="t" style="left:119px;top:172px;">Reflector<span style="letter-spacing:-1.6px">_</span>prod<span style="letter-spacing:-1.6px">_</span>side<span style="letter-spacing:-1.6px">_</span>b<span style="letter-spacing:-1.6px">_</span>033</div>
<div style="left:454px;top:174px;width:24px;height:10px;background:#000"></div>
<div class="cb" style="left:42px;top:191px;width:12px;height:12px;"></div>
<div style="left:63px;top:195px;width:5px;height:5px;border-radius:50%;border:1.2px solid #222"></div>
<div class="t" style="left:60px;top:190px;width:55px;text-align:right">25</div>
<div class="t" style="left:119px;top:190px;">Reflector<span style="letter-spacing:-1.6px">_</span>prod<span style="letter-spacing:-1.6px">_</span>side<span style="letter-spacing:-1.6px">_</span>a<span style="letter-spacing:-1.6px">_</span>032</div>
<div style="left:454px;top:192px;width:24px;height:10px;background:#000"></div>
<div class="cb" style="left:42px;top:209px;width:12px;height:12px;"></div>
<div style="left:63px;top:213px;width:5px;height:5px;border-radius:50%;border:1.2px solid #222"></div>
<div class="t" style="left:60px;top:208px;width:55px;text-align:right">26</div>
<div class="t" style="left:119px;top:208px;">Reflector<span style="letter-spacing:-1.6px">_</span>workpiece<span style="letter-spacing:-1.6px">_</span>034</div>
<div style="left:454px;top:210px;width:24px;height:10px;background:#000"></div>
<div class="cb" style="left:42px;top:227px;width:12px;height:12px;"></div>
<div style="left:63px;top:231px;width:5px;height:5px;border-radius:50%;border:1.2px solid #222"></div>
<div class="t" style="left:60px;top:226px;width:55px;text-align:right">45</div>
<div class="t" style="left:119px;top:226px;">Reflector</div>
<div style="left:454px;top:228px;width:24px;height:10px;background:#000"></div>
<div class="cb" style="left:42px;top:245px;width:12px;height:12px;"></div>
<div style="left:63px;top:249px;width:5px;height:5px;border-radius:50%;border:1.2px solid #222"></div>
<div class="t" style="left:60px;top:244px;width:55px;text-align:right">73</div>
<div class="t" style="left:119px;top:244px;">Reflector<span style="letter-spacing:-1.6px">_</span>parting<span style="letter-spacing:-1.6px">_</span>048</div>
<div style="left:454px;top:246px;width:24px;height:10px;background:#000"></div>
<div class="cb" style="left:42px;top:263px;width:12px;height:12px;"></div>
<div style="left:63px;top:267px;width:5px;height:5px;border-radius:50%;border:1.2px solid #222"></div>
<div class="t" style="left:60px;top:262px;width:55px;text-align:right">119</div>
<div class="t" style="left:119px;top:262px;">Reflector<span style="letter-spacing:-1.6px">_</span>cool<span style="letter-spacing:-1.6px">_</span>026</div>
<div style="left:454px;top:264px;width:24px;height:10px;background:#000"></div>
<div class="cb" style="left:42px;top:281px;width:12px;height:12px;"></div>
<div style="left:63px;top:285px;width:5px;height:5px;border-radius:50%;border:1.2px solid #222"></div>
<div class="t" style="left:60px;top:280px;width:55px;text-align:right">121</div>
<div class="t" style="left:119px;top:280px;">Reflector<span style="letter-spacing:-1.6px">_</span>core<span style="letter-spacing:-1.6px">_</span>031</div>
<div style="left:454px;top:282px;width:24px;height:10px;background:#000"></div>
<div class="cb" style="left:42px;top:299px;width:12px;height:12px;"></div>
<div style="left:63px;top:303px;width:5px;height:5px;border-radius:50%;border:1.2px solid #222"></div>
<div class="t" style="left:60px;top:298px;width:55px;text-align:right">123</div>
<div class="t" style="left:119px;top:298px;">Reflector<span style="letter-spacing:-1.6px">_</span>cavity<span style="letter-spacing:-1.6px">_</span>027</div>
<div style="left:454px;top:300px;width:24px;height:10px;background:#000"></div>
<div class="cb" style="left:42px;top:317px;width:12px;height:12px;"></div>
<svg style="left:42px;top:317px" width="12" height="12"><path d="M2.5 5.5 L5 8.5 L10 2.5" stroke="#000" stroke-width="2.2" fill="none"/></svg>
<div style="left:63px;top:321px;width:5px;height:5px;border-radius:50%;border:1.2px solid #222"></div>
<div class="t" style="left:60px;top:316px;width:55px;text-align:right">127</div>
<div class="t" style="left:119px;top:316px;">Reflector<span style="letter-spacing:-1.6px">_</span>prod<span style="letter-spacing:-1.6px">_</span>028</div>
<div style="left:454px;top:318px;width:24px;height:10px;background:#000"></div>
<div class="cb" style="left:42px;top:335px;width:12px;height:12px;"></div>
<svg style="left:42px;top:335px" width="12" height="12"><path d="M2.5 5.5 L5 8.5 L10 2.5" stroke="#000" stroke-width="2.2" fill="none"/></svg>
<div style="left:63px;top:339px;width:5px;height:5px;border-radius:50%;border:1.2px solid #222"></div>
<div class="t" style="left:60px;top:334px;width:55px;text-align:right">141</div>
<div class="t" style="left:119px;top:334px;">Reflector<span style="letter-spacing:-1.6px">_</span>top<span style="letter-spacing:-1.6px">_</span>035</div>
<div style="left:454px;top:336px;width:24px;height:10px;background:#000"></div>
<div class="cb" style="left:42px;top:353px;width:12px;height:12px;"></div>
<div style="left:63px;top:357px;width:5px;height:5px;border-radius:50%;border:1.2px solid #222"></div>
<div class="t" style="left:60px;top:352px;width:55px;text-align:right">154</div>
<div class="t" style="left:119px;top:352px;">Reflector<span style="letter-spacing:-1.6px">_</span>var<span style="letter-spacing:-1.6px">_</span>036</div>
<div style="left:454px;top:354px;width:24px;height:10px;background:#000"></div>
<div class="cb" style="left:42px;top:371px;width:12px;height:12px;"></div>
<div style="left:63px;top:375px;width:5px;height:5px;border-radius:50%;border:1.2px solid #222"></div>
<div class="t" style="left:60px;top:370px;width:55px;text-align:right">157</div>
<div class="t" style="left:119px;top:370px;">Reflector<span style="letter-spacing:-1.6px">_</span>trim<span style="letter-spacing:-1.6px">_</span>037</div>
<div style="left:454px;top:372px;width:24px;height:10px;background:#000"></div>
<div class="cb" style="left:42px;top:389px;width:12px;height:12px;"></div>
<div style="left:63px;top:393px;width:5px;height:5px;border-radius:50%;border:1.2px solid #222"></div>
<div class="t" style="left:60px;top:388px;width:55px;text-align:right">168</div>
<div class="t" style="left:119px;top:388px;">Reflector<span style="letter-spacing:-1.6px">_</span>layout<span style="letter-spacing:-1.6px">_</span>047</div>
<div style="left:454px;top:390px;width:24px;height:10px;background:#000"></div>
<div style="left:490px;top:76px;width:1398px;height:1005px;background:linear-gradient(#2e62c8,#d0d6fb);border-left:1px solid #606878"></div>
<div style="left:490px;top:1081px;width:1398px;height:21px;background:#c0c0c0;border-bottom:1px solid #777;border-right:1px solid #666"></div>
<svg style="left:0;top:0" width="1920" height="1166"><path d="M1352 266 C1360 285, 1395 310, 1440 326 C1480 324, 1545 305, 1591 263 Z" fill="#1b2d5c" stroke="#000" stroke-width="1.6"/><path d="M1362 268 C1375 290, 1410 312, 1460 318 M1380 266 C1400 290, 1430 308, 1478 312 C1520 305, 1560 285, 1590 263" fill="none" stroke="#000" stroke-width="1.1"/><path d="M1352 266 C1362 282, 1380 300, 1420 316 L1440 326 C1430 320, 1400 300, 1380 266Z" fill="#22407a"/><path d="M1418 314 C1425 322, 1440 328, 1470 326 L1488 320 C1465 322, 1440 320, 1418 314Z" fill="#20407a" stroke="#000" stroke-width="1"/><path d="M1181 113 L1613 89 L1785 210 L1352 234 Z" fill="#565656" stroke="#000" stroke-width="2" stroke-linejoin="round"/><path d="M1181 113 L1352 234 L1352 266 L1180 145 Z" fill="#5b5b5b" stroke="#000" stroke-width="2" stroke-linejoin="round"/><path d="M1352 234 L1785 210 L1782 290 L1674 295 L1674 258 L1352 266 Z" fill="#525252" stroke="#000" stroke-width="2" stroke-linejoin="round"/><path d="M1605 262 L1674 258 L1674 295 L1606 276 Z" fill="#0088a8" stroke="#000" stroke-width="1.6" stroke-linejoin="round"/><path d="M1277 435 L1302 426 L1458 430 L1515 434 L1572 445 L1610 462 L1631 477 L1634 490 L1641 509 L1642 526 L1629 533 L1597 546 L1593 541 L1591 526 L1561 556 L1561 548 L1557 611 L1529 609 L1528 578 L1504 588 L1504 620 L1459 633 L1458 635 L1389 628 L1375 624 L1374 608 L1355 570 L1347 557 L1341 559 L1317 555 L1317 518 L1312 509 L1291 478 L1281 457 Z" fill="#4e2a02" stroke="#000" stroke-width="2" stroke-linejoin="round"/><path d="M1343 532 L1389 540 L1470 540 L1591 520 L1561 556 C1530 572, 1500 585, 1470 588 L1429 575 L1396 581 L1352 562 Z" fill="#361c00"/><path d="M1352 562 C1370 572, 1385 578, 1396 581 M1429 574 C1440 580, 1455 586, 1470 588 C1500 586, 1535 575, 1561 556" fill="none" stroke="#000" stroke-width="1.4"/><path d="M1343 532 L1389 540 L1470 540 L1591 518" fill="none" stroke="#000" stroke-width="1.6"/><path d="M1347 545 L1396 570 M1355 552 C1365 560, 1380 568, 1396 575 M1365 540 L1396 560" fill="none" stroke="#000" stroke-width="1.1"/><path d="M1283 437 L1304 426 L1364 430.6 L1458 431 L1515 434 L1572 445 L1610 462 L1631 477 L1634 490 L1641 509 L1642 526 L1629 533 L1597 546 L1593 541 L1591 514 L1591 505 L1553 509 L1502 513 L1470 514 L1341 489 C1348 484, 1353 480, 1353 474 C1352 466, 1345 461, 1335 456 Z" fill="#4c4e98" stroke="#000" stroke-width="1.4" stroke-linejoin="round"/><path d="M1353 473 C1375 482, 1400 488, 1426 484 C1445 480, 1475 466, 1502 465 C1540 466, 1590 472, 1625 490 C1610 500, 1590 506, 1553 509 C1520 512, 1490 513, 1470 513 L1341 489 C1348 484, 1353 480, 1353 474Z" fill="#5e5cb6" stroke="#000" stroke-width="1.4"/><path d="M1283 437 L1335 456 C1345 461, 1352 466, 1353 474 C1353 480, 1348 484, 1341 489" fill="none" stroke="#000" stroke-width="6" stroke-linejoin="round"/><path d="M1283 437 L1335 456 C1345 461, 1352 466, 1353 474 C1353 480, 1348 484, 1341 489" fill="none" stroke="#6a6ab4" stroke-width="2.6" stroke-linejoin="round"/><path d="M1343 492 L1470 517 L1553 512 L1591 508" fill="none" stroke="#8888c8" stroke-width="1.6"/><path d="M1345 495 L1470 520 L1591 511" fill="none" stroke="#000" stroke-width="1.2"/><path d="M1278 435 C1282 430, 1292 426, 1304 425.5 L1364 430 L1458 431 L1515 434.5 L1572 446 L1610 463 L1631 478" fill="none" stroke="#000" stroke-width="2.2" stroke-linejoin="round"/><path d="M1282 438 C1286 434, 1294 431, 1302 431 L1374 435 L1458 434.5 L1515 438 L1572 449.5 L1608 466 L1626 481" fill="none" stroke="#7272bc" stroke-width="2.2"/><path d="M1283 440 C1287 436, 1295 433, 1302 433 L1374 437 L1458 436.5 L1515 440 L1572 451.5 L1606 468 L1624 482" fill="none" stroke="#000" stroke-width="1.3"/><path d="M1284 438 L1284 460 M1306 428 L1306 444 M1458 436 L1459 468 M1515 439 L1515 466 M1280 461 L1328 457 M1286 474 L1300 473" fill="none" stroke="#000" stroke-width="1.2"/><path d="M1465 512 L1503 466" stroke="#000" stroke-width="1"/><path d="M1495 512 L1533 466" stroke="#000" stroke-width="1"/><path d="M1525 512 L1563 466" stroke="#000" stroke-width="1"/><path d="M1558 512 L1588 466" stroke="#000" stroke-width="1"/><path d="M1585 512 L1608 466" stroke="#000" stroke-width="1"/><path d="M1605 512 L1622 466" stroke="#000" stroke-width="1"/><path d="M1591 505 L1628 490 L1641 509 L1642 526 L1629 533 L1597 546 L1593 541Z" fill="#4a4c94" stroke="#000" stroke-width="1.4"/><path d="M1617 530 L1640 520 M1617 520 L1617 535 M1628 490 L1632 478" stroke="#000" stroke-width="1"/><path d="M1581 510 L1581 525" stroke="#000" stroke-width="1.4"/><path d="M1345.5 490 L1345.5 532" stroke="#000" stroke-width="1.4"/><path d="M1340.5 491 L1340.5 531" stroke="#000" stroke-width="1" stroke-dasharray="4 3"/><path d="M1317 519 L1341 520" stroke="#000" stroke-width="0.8"/><path d="M1528 564 C1532 556, 1550 550, 1558 552 L1557 611 L1529 609 Z" fill="#482600" stroke="#000" stroke-width="1.6"/><path d="M1458 594 L1504 588 L1504 620 L1459 633 Z" fill="#482600" stroke="#000" stroke-width="1.4"/><path d="M1396 556 C1400 550, 1425 550, 1429 558 L1427 616 L1397 613 Z" fill="#4c2a00" stroke="#000" stroke-width="1.6"/><path d="M1389 595 L1389 628 M1478 592 L1478 630 M1470 594 L1470 632" stroke="#000" stroke-width="1.2"/><path d="M1314 466 L1314 508" stroke="#2020d0" stroke-width="1.6"/><path d="M1314 465 L1356 462" stroke="#e02020" stroke-width="1.8"/><path d="M1314 466 L1330 478" stroke="#40e040" stroke-width="1.4"/><text x="1336" y="461" font-family="Liberation Sans" font-size="11" fill="#111">ORIGIN</text><text x="1330" y="473" font-family="Liberation Sans" font-size="11" fill="#50e050">Oy</text><text x="1316" y="505" font-family="Liberation Sans" font-size="11" fill="#3030a0">Oz</text><path d="M1160 684 L1331 808 L1323 1007 L1152 887 Z" fill="#5b5b5b" stroke="#000" stroke-width="2" stroke-linejoin="round"/><path d="M1331 808 L1652 795 L1653 834 L1762 828 L1755 982 L1323 1007 Z" fill="#525252" stroke="#000" stroke-width="2" stroke-linejoin="round"/><path d="M1160 684 L1474 676 L1474 714 L1590 708 L1762 828 L1653 834 L1652 795 L1331 808 Z" fill="#007894" stroke="#000" stroke-width="2" stroke-linejoin="round"/><path d="M1474 676 L1474 726" stroke="#000" stroke-width="2.2"/><path d="M1267 705 L1281 699 L1358 702 L1471 703 L1471 727 C1500 730, 1540 738, 1583 747 C1600 752, 1612 760, 1631 789 L1579 777 L1521 784 L1458 784 L1396 775 L1329 760 C1330 750, 1333 745, 1333 741 C1320 730, 1290 718, 1267 705 Z" fill="#884600" stroke="#000" stroke-width="1.6" stroke-linejoin="round"/><path d="M1281 699 L1358 702 L1471 703 L1471 727 C1420 752, 1370 755, 1333 741 C1320 730, 1290 718, 1267 705Z" fill="#763c00"/><path d="M1333 741 C1370 755, 1420 752, 1471 727 L1523 733" fill="none" stroke="#000" stroke-width="1.4"/><path d="M1338 746 C1372 759, 1420 757, 1471 731 L1523 736" fill="none" stroke="#d8a468" stroke-width="1.3"/><path d="M1340 749 C1374 762, 1420 760, 1471 734 L1523 739" fill="none" stroke="#000" stroke-width="1"/><path d="M1447 704 L1447 746" stroke="#000" stroke-width="1.2"/><path d="M1454 783 L1493.6 739" stroke="#000" stroke-width="1.7"/><path d="M1514.4 783.5 L1549.4 740" stroke="#000" stroke-width="1.7"/><path d="M1544 781 L1570 744.5" stroke="#000" stroke-width="1.7"/><path d="M1569 777 L1587.7 750" stroke="#000" stroke-width="1.7"/><path d="M1584.4 777 L1599.7 755.5" stroke="#000" stroke-width="1.7"/><path d="M1595.4 779 L1608.5 762" stroke="#000" stroke-width="1.7"/><path d="M1511 752 L1523 738" stroke="#000" stroke-width="1.7"/><path d="M1484 784 C1480 775, 1482 752, 1498 750 C1512 750, 1515 762, 1513 770 C1511 778, 1506 782, 1500 784Z" fill="#7c4000" stroke="#000" stroke-width="1.4"/><path d="M1494 784 L1494 770 C1494 766, 1500 764, 1501 768 L1501 784Z" fill="#a86420" stroke="#000" stroke-width="1"/><path d="M1494 773 L1501 766" stroke="#000" stroke-width="0.9"/><path d="M1340 681 L1357 701 M1271 763 L1331 760 M1360 805 L1400 776 M1579 777 L1650 795" fill="none" stroke="#000" stroke-width="1.2"/><path d="M551 1020.5 L593 1019" stroke="#e02020" stroke-width="2"/><path d="M552 1022 L569 1020 L552 1037Z" fill="#f0f0f4" opacity="0.7"/><path d="M551 1021 L566 1032" stroke="#30d030" stroke-width="1.6"/><path d="M550 1021 L550 1062" stroke="#1a1ad0" stroke-width="2.2"/><text x="598" y="1015" font-family="Liberation Sans" font-size="12" fill="#e02020">Ox</text><text x="570" y="1031" font-family="Liberation Sans" font-size="12" fill="#30d030">Oy</text><text x="522" y="1047" font-family="Liberation Sans" font-size="12" fill="#111">ORIGIN</text><text x="549" y="1066" font-family="Liberation Sans" font-size="12" fill="#2020c0">Oz</text><path d="M501 1071 H640 M501 1065 V1071 M529 1067 V1071 M557 1067 V1071 M585 1067 V1071 M613 1067 V1071 M640 1064 V1071" stroke="#111" stroke-width="1.8"/><text x="641" y="1067" font-family="Liberation Sans" font-size="12" fill="#111">50(mm)</text></svg>
<div class="t" style="left:1143px;top:1084px;letter-spacing:-0.3px">X: -264.671   Y: -133.942   Z: -28.311</div>
<div style="left:492px;top:1082px;width:55px;height:18px;border:1px solid #808080;border-radius:3px;background:linear-gradient(#f2f2f2,#e6e6e6 50%,#d6d6d6 51%,#cacaca)"></div>
<svg style="left:497px;top:1084px" width="16" height="14"><path d="M7 9 L7 1" stroke="#1a30c0" stroke-width="1.6"/><path d="M7 9 L2 13" stroke="#e02020" stroke-width="2"/><path d="M7 9 L14 12" stroke="#20b020" stroke-width="2"/></svg>
<div class="t" style="left:514px;top:1084px;">User</div>
<div style="left:549px;top:1082px;width:32px;height:18px;border:1px solid #808080;border-radius:3px;background:linear-gradient(#f2f2f2,#e6e6e6 50%,#d6d6d6 51%,#cacaca)"></div>
<svg style="left:552px;top:1084px" width="14" height="14"><path d="M7 1 L13 4 L13 10 L7 13 L1 10 L1 4Z" fill="#2a7ad8" stroke="#1a5ab0" stroke-width="0.8"/><path d="M1 4 L7 7 L13 4 M7 7 V13" stroke="#5aa0f0" stroke-width="0.6" fill="none"/></svg>
<div style="left:3px;top:1107px;width:8px;height:30px;background:radial-gradient(circle,#b4b4b4 0.6px,transparent 1px) 0 0/4px 4px"></div>
<div class="t" style="left:12px;top:1114px;letter-spacing:-0.12px">Select a New Command...</div>
<svg style="left:152px;top:1110px" width="24" height="22"><path d="M2 6 L8 6 L10 8 L18 8 L18 21 L2 21Z" fill="#e8c830" stroke="#b09010" stroke-width="0.8"/><path d="M4 11 L22 11 L18 21 L2 21Z" fill="#f6de50" stroke="#c0a010" stroke-width="0.8"/><path d="M12 7 L17 2 L22 5 L17 10Z" fill="#606060" stroke="#303030" stroke-width="0.8"/></svg>
<div style="left:179px;top:1107px;width:150px;height:28px;border:1px solid #a8a8a8;background:#fff"></div>
<div style="left:312px;top:1108px;width:17px;height:26px;border:1px solid #8e8f8f;border-radius:2px;background:linear-gradient(#f3f3f3,#e4e4e4 50%,#d4d4d4 51%,#cfcfcf)"></div><svg style="left:316px;top:1119px" width="9" height="5"><path d="M0 0 L9 0 L4.5 5Z" fill="#000"/></svg>
<div style="left:335px;top:1107px;width:8px;height:30px;background:radial-gradient(circle,#b4b4b4 0.6px,transparent 1px) 0 0/4px 4px"></div>
<div class="t b" style="left:349px;top:1112px;font-size:16px;line-height:20px">X</div>
<div style="left:369px;top:1107px;width:90px;height:28px;border:1px solid #b0b0b0;background:#fff"></div>
<div class="t" style="left:373px;top:1114px;">42.5438mm</div>
<div class="t b" style="left:467px;top:1112px;font-size:16px;line-height:20px">Y</div>
<div style="left:487px;top:1107px;width:91px;height:28px;border:1px solid #b0b0b0;background:#fff"></div>
<div class="t" style="left:490px;top:1114px;">0.6405mm</div>
<div class="t b" style="left:586px;top:1112px;font-size:16px;line-height:20px">Z</div>
<div style="left:606px;top:1107px;width:91px;height:28px;border:1px solid #b0b0b0;background:#fff"></div>
<div class="t" style="left:610px;top:1114px;">43.4276mm</div>
<div style="left:702px;top:1107px;width:8px;height:30px;background:radial-gradient(circle,#b4b4b4 0.6px,transparent 1px) 0 0/4px 4px"></div>
<svg style="left:712px;top:1106px" width="30" height="30"><path d="M3 4 L3 24 L8 19 L12 27 L15 26 L11 18 L18 18 Z" fill="#dfe6f2" stroke="#1a3a80" stroke-width="1.2"/><ellipse cx="21" cy="9" rx="7" ry="6" fill="#b8cce8" stroke="#2a4a80" stroke-width="1"/><text x="18" y="13" font-family="Liberation Sans" font-weight="bold" font-size="10" fill="#1a2a60">?</text></svg>
<svg style="left:748px;top:1105px" width="34" height="32"><path d="M6 2 L14 28" stroke="#3060d0" stroke-width="1"/><path d="M11 8 L28 8" stroke="#3060d0" stroke-width="1"/><circle cx="19" cy="15" r="7" fill="none" stroke="#3060d0" stroke-width="1.2"/><g fill="#e02020"><circle cx="7" cy="7" r="2.5"/><circle cx="19" cy="15" r="2.5"/><circle cx="11" cy="20" r="1.5"/><circle cx="13" cy="27" r="2.5"/></g><path d="M21 18 L21 29 L24 26 L27 31 L29 30 L26 25 L30 25Z" fill="#222" stroke="#fff" stroke-width="0.6"/></svg>
<svg style="left:785px;top:1107px" width="28" height="28"><path d="M3 12 L17 5 L24 17 L10 23Z" fill="#e4ecf6" stroke="#8898b8" stroke-width="0.8" stroke-dasharray="1.5 1"/><rect x="7" y="21" width="3" height="3" fill="#f06020"/><rect x="14" y="4" width="3" height="3" fill="#f06020"/><path d="M17 5 L25 10 L21 12Z" fill="#111"/></svg>
<div style="left:818px;top:1107px;width:23px;height:29px;background:#000"></div>
<div class="t b" style="left:825px;top:1114px;color:#fff;font-size:13px">L</div>
<div class="t" style="left:854px;top:1114px;letter-spacing:0.5px">-<span style="position:relative;top:-1px">·</span>-</div>
<div style="left:882px;top:1107px;width:8px;height:30px;background:radial-gradient(circle,#b4b4b4 0.6px,transparent 1px) 0 0/4px 4px"></div>
<div style="left:890px;top:1105px;width:24px;height:33px;border:1px solid #3c7fb1;border-radius:3px;background:linear-gradient(#d8ecfa,#b8dcf6)"></div>
<div style="left:917px;top:1105px;width:24px;height:33px;border:1px solid #888;border-radius:3px;background:linear-gradient(#f2f2f2,#e6e6e6 50%,#d6d6d6 51%,#cacaca)"></div>
<div style="left:944px;top:1105px;width:24px;height:33px;border:1px solid #888;border-radius:3px;background:linear-gradient(#f2f2f2,#e6e6e6 50%,#d6d6d6 51%,#cacaca)"></div>
<svg style="left:890px;top:1108px" width="24" height="28"><path d="M5 20 L14 13" stroke="#e02020" stroke-width="3"/><path d="M4 14 C6 8, 14 6, 18 10" stroke="#888" stroke-width="1" fill="none"/><text x="15" y="11" font-family="Liberation Sans" font-weight="bold" font-size="9" fill="#555">X</text></svg>
<svg style="left:917px;top:1108px" width="24" height="28"><path d="M12 14 L21 22" stroke="#20c020" stroke-width="3"/><path d="M5 20 C5 12, 10 8, 16 9" stroke="#888" stroke-width="1" fill="none"/><text x="2" y="10" font-family="Liberation Sans" font-weight="bold" font-size="9" fill="#555">Y</text></svg>
<svg style="left:944px;top:1108px" width="24" height="28"><path d="M12 18 L12 5" stroke="#1a30d0" stroke-width="3"/><path d="M12 2 L8 8 L16 8Z" fill="#1a30d0"/><path d="M4 8 C6 20, 18 20, 20 8" stroke="#888" stroke-width="1" fill="none"/><text x="14" y="25" font-family="Liberation Sans" font-weight="bold" font-size="9" fill="#555">Z</text></svg>
<div style="left:971px;top:1107px;width:42px;height:28px;border:1px solid #a8a8a8;background:#fff"></div>
<div style="left:996px;top:1108px;width:17px;height:26px;border:1px solid #8e8f8f;border-radius:2px;background:linear-gradient(#f3f3f3,#e4e4e4 50%,#d4d4d4 51%,#cfcfcf)"></div><svg style="left:1000px;top:1119px" width="9" height="5"><path d="M0 0 L9 0 L4.5 5Z" fill="#000"/></svg>
<div class="t" style="left:975px;top:1114px;">1</div>
<div style="left:1016px;top:1105px;width:23px;height:33px;border:1px solid #888;border-radius:3px;background:linear-gradient(#f2f2f2,#e6e6e6 50%,#d6d6d6 51%,#cacaca)"></div>
<div class="t" style="left:1024px;top:1114px;">-</div>
<div style="left:1042px;top:1105px;width:24px;height:33px;border:1px solid #888;border-radius:3px;background:linear-gradient(#f2f2f2,#e6e6e6 50%,#d6d6d6 51%,#cacaca)"></div>
<div class="t" style="left:1050px;top:1114px;">+</div>
<div style="left:140px;top:257px;width:956px;height:681px;border:1px solid #1e2a36;border-radius:6px 6px 0 0;background:linear-gradient(#9cb2cd 0,#b9cfe7 24px,#f0ecee 25px,#f0f0f0 28px);box-shadow:inset 1px 1px 0 #e8f4fb,inset -1px -1px 0 #bfe0ea"></div>
<div style="left:141px;top:282px;width:2px;height:655px;background:#d8ecf4"></div>
<div style="left:1092px;top:282px;width:3px;height:655px;background:#d2eaf2"></div>
<div style="left:141px;top:935px;width:954px;height:2px;background:#c8e4ee"></div>
<svg style="left:143px;top:261px" width="20" height="20"><path d="M2 12 L8 8.5 L17 5 L17.5 10 L10 17.5 L2 16.5Z" fill="#e6e2c4" stroke="#8a8a80" stroke-width="0.8"/><path d="M8 8.5 L8 16.5" stroke="#c8c2a0" stroke-width="1"/><path d="M9 2 L16 2 L13 9 L12 8.5 L10 9Z" fill="#4a70b8" stroke="#2a3a60" stroke-width="0.7"/><ellipse cx="11.5" cy="11.5" rx="2" ry="2.6" fill="#d8c040" stroke="#403810" stroke-width="0.6"/></svg>
<div class="t" style="left:165px;top:264px;">Open File</div>
<div style="left:1060px;top:262px;width:31px;height:17px;border:1px solid #3a1a1a;border-radius:3px;background:linear-gradient(#eeb1a0 0,#e0907a 45%,#c8452a 50%,#d0573a 100%)"></div>
<svg style="left:1060px;top:262px" width="31" height="17"><path d="M11 4.5 L20 12.5 M20 4.5 L11 12.5" stroke="#4a1a10" stroke-width="4.2" stroke-linecap="round"/><path d="M11 4.5 L20 12.5 M20 4.5 L11 12.5" stroke="#fff" stroke-width="2.4" stroke-linecap="round"/></svg>
<div class="grp" style="left:150px;top:297px;width:147px;height:134px;"></div>
<div style="left:156px;top:289px;width:30px;height:14px;background:#f0f0f0"></div>
<div class="t" style="left:158px;top:289px;">CAM</div>
<div class="grp" style="left:150px;top:442px;width:147px;height:197px;"></div>
<div style="left:156px;top:434px;width:56px;height:14px;background:#f0f0f0"></div>
<div class="t" style="left:158px;top:434px;">File Types</div>
<div class="grp" style="left:150px;top:651px;width:147px;height:277px;"></div>
<div style="left:156px;top:643px;width:40px;height:14px;background:#f0f0f0"></div>
<div class="t" style="left:158px;top:643px;">Native</div>
<div class="rad" style="left:159px;top:313px;width:12px;height:12px;"></div>
<div class="t" style="left:178px;top:312px;letter-spacing:-0.2px">Workzones</div>
<div class="rad" style="left:159px;top:339px;width:12px;height:12px;"></div>
<div class="t" style="left:178px;top:338px;letter-spacing:-0.2px">Open Sequence</div>
<div class="btn" style="left:161px;top:362px;width:125px;height:26px;"></div>
<div class="t" style="left:169px;top:368px;">Search a Workzone...</div>
<div class="btn" style="left:161px;top:395px;width:125px;height:26px;"></div>
<div class="t" style="left:203px;top:401px;">Favorite</div>
<div class="rad" style="left:159px;top:458px;width:12px;height:12px;"></div>
<div class="t" style="left:178px;top:457px;letter-spacing:-0.2px">WorkNC CAD Files</div>
<div class="rad" style="left:159px;top:484px;width:12px;height:12px;"></div>
<div class="t" style="left:178px;top:483px;letter-spacing:-0.2px">WorkNC CAM Files</div>
<div class="rad" style="left:159px;top:510px;width:12px;height:12px;"></div>
<div class="t" style="left:178px;top:509px;letter-spacing:-0.2px">IGES 2D Files</div>
<div class="rad" style="left:159px;top:536px;width:12px;height:12px;"></div>
<div class="t" style="left:178px;top:535px;letter-spacing:-0.2px">IGES 3D Files</div>
<div class="rad" style="left:159px;top:562px;width:12px;height:12px;"></div>
<div class="t" style="left:178px;top:561px;letter-spacing:-0.2px">DWG/DXF Files</div>
<div class="rad" style="left:159px;top:588px;width:12px;height:12px;"></div>
<div class="t" style="left:178px;top:587px;letter-spacing:-0.2px">STEP Files</div>
<div class="rad" style="left:159px;top:614px;width:12px;height:12px;"></div>
<div class="t" style="left:178px;top:613px;letter-spacing:-0.2px">STL Files</div>
<div class="rad" style="left:159px;top:667px;width:12px;height:12px;"></div>
<div class="t" style="left:178px;top:666px;letter-spacing:-0.2px">Catia V4 Files</div>
<div class="rad" style="left:159px;top:693px;width:12px;height:12px;"></div>
<div class="t" style="left:178px;top:692px;letter-spacing:-0.2px">Catia V5 Files</div>
<div class="rad" style="left:159px;top:719px;width:12px;height:12px;"></div>
<div class="t" style="left:178px;top:718px;letter-spacing:-0.2px">Catia V5 Files (Tree)</div>
<div class="rad" style="left:159px;top:745px;width:12px;height:12px;"></div>
<div class="t" style="left:178px;top:744px;letter-spacing:-0.2px">Catia V6 Files</div>
<div class="rad" style="left:159px;top:771px;width:12px;height:12px;"></div>
<div class="t" style="left:178px;top:770px;letter-spacing:-0.2px">Parasolid Files</div>
<div class="rad" style="left:159px;top:797px;width:12px;height:12px;"></div>
<div class="t" style="left:178px;top:796px;letter-spacing:-0.2px">CaddS Files</div>
<div class="rad" style="left:159px;top:823px;width:12px;height:12px;"></div><div style="left:162px;top:826px;width:6px;height:6px;border-radius:50%;background:radial-gradient(circle at 45% 35%,#7cc4e8 0,#2a6a98 45%,#173e66 100%)"></div>
<div class="t" style="left:178px;top:822px;letter-spacing:-0.2px">Unigraphics Files</div>
<div class="rad" style="left:159px;top:849px;width:12px;height:12px;"></div>
<div class="t" style="left:178px;top:848px;letter-spacing:-0.2px">Proengineer Files</div>
<div class="rad" style="left:159px;top:875px;width:12px;height:12px;"></div>
<div class="t" style="left:178px;top:874px;letter-spacing:-0.2px">SolidWorks Files</div>
<div class="rad" style="left:159px;top:901px;width:12px;height:12px;"></div>
<div class="t" style="left:178px;top:900px;letter-spacing:-0.2px">JT Files</div>
<div class="t" style="left:309px;top:297px;">Look in:</div>
<div style="left:360px;top:293px;width:420px;height:22px;border:1px solid #abadb3;background:#fff"></div>
<div style="left:762px;top:294px;width:17px;height:20px;border:1px solid #8e8f8f;border-radius:2px;background:linear-gradient(#f3f3f3,#e4e4e4 50%,#d4d4d4 51%,#cfcfcf)"></div><svg style="left:766px;top:302px" width="9" height="5"><path d="M0 0 L9 0 L4.5 5Z" fill="#000"/></svg>
<svg style="left:365px;top:297px" width="16" height="14"><path d="M1 3 L6 3 L7 5 L14 5 L14 12 L1 12Z" fill="#f0e27a" stroke="#6a6a30" stroke-width="0.8"/><path d="M3 7 L15 7 L14 12 L1 12Z" fill="#e8d85a" stroke="#404020" stroke-width="0.8"/></svg>
<div class="t" style="left:384px;top:297px;">C:/Jobs/parts_to_cut/headlight/</div>
<svg style="left:790px;top:297px" width="16" height="14"><path d="M1 7 L7 1.5 L7 4.5 L14 4.5 L14 9.5 L7 9.5 L7 12.5Z" fill="#2fd6f0" stroke="#1a3a70" stroke-width="1"/></svg>
<svg style="left:813px;top:296px" width="17" height="15"><path d="M1 2 L6 2 L7 4 L15 4 L15 14 L1 14Z" fill="#f6ee80" stroke="#303010" stroke-width="1"/><path d="M8 12 L8 7 L5 7 M8 7 L12 7" stroke="#000" stroke-width="1.2" fill="none"/><path d="M4 8 L6 6 L6 10Z" fill="#000"/></svg>
<div style="left:840px;top:294px;width:21px;height:20px;border:1px solid #3c7fb1;border-radius:2px;background:linear-gradient(#eaf6fd,#bee6fd)"></div>
<svg style="left:843px;top:298px" width="15" height="12"><g fill="#2040a0"><rect x="1" y="1" width="3" height="2"/><rect x="5" y="1.5" width="3" height="1"/><rect x="1" y="5" width="3" height="2"/><rect x="5" y="5.5" width="3" height="1"/><rect x="1" y="9" width="3" height="2"/><rect x="5" y="9.5" width="3" height="1"/><rect x="9" y="1" width="2" height="2"/><rect x="12" y="1.5" width="2" height="1"/><rect x="9" y="5" width="2" height="2"/><rect x="12" y="5.5" width="2" height="1"/><rect x="9" y="9" width="2" height="2"/><rect x="12" y="9.5" width="2" height="1"/></g></svg>
<svg style="left:866px;top:298px" width="14" height="12"><g stroke="#222" stroke-width="1" fill="none"><path d="M0.5 1.5 H13.5 M0.5 4.5 H13.5 M0.5 7.5 H13.5 M0.5 10.5 H13.5 M2.5 0 V12 M6.5 0 V12 M10.5 0 V12"/></g></svg>
<div style="left:308px;top:320px;width:577px;height:538px;border:1px solid #8a8a8a;border-left-color:#6a6a6a;border-top-color:#6a6a6a;box-shadow:inset 1px 1px 0 #b8b8b8;background:#fff"></div>
<svg style="left:313px;top:323px" width="14" height="16"><path d="M0.5 1 L6 0.5 L6 15 L0.5 14.5Z" fill="#f2dc84" stroke="#d8b850" stroke-width="0.6"/><path d="M5 2 L11 1.5 L12 9 L12 14.5 L5 15Z" fill="#ecc860" stroke="#caa040" stroke-width="0.6"/><path d="M11 6 L13 8 L12 12Z" fill="#8ac060"/></svg>
<div class="t" style="left:330px;top:324px;letter-spacing:-0.03px">..</div>
<svg style="left:314px;top:343px" width="13" height="13"><path d="M1 2.5 L4.5 0.5 L8.5 1.5 L8.5 8 L5 10 L1 8.5Z" fill="#3f7fd0"/><path d="M1 2.5 L4.5 0.5 L8.5 1.5 L5 3.5Z" fill="#a0ccf6"/><path d="M1 2.5 L5 3.5 L5 10 L1 8.5Z" fill="#6aa6ea"/><path d="M2 9 L8.5 6 L12.5 8 L12.5 10.5 L6 13 L2 11Z" fill="#3f80d4"/><path d="M2 9 L8.5 6 L12.5 8 L6 11Z" fill="#a8d2fa"/><path d="M3.5 7.2 L8.5 5.2" stroke="#e8902a" stroke-width="1.3"/></svg>
<div class="t" style="left:330px;top:342px;letter-spacing:-0.03px">Reflector.prt</div>
<svg style="left:314px;top:361px" width="13" height="13"><path d="M1 2.5 L4.5 0.5 L8.5 1.5 L8.5 8 L5 10 L1 8.5Z" fill="#3f7fd0"/><path d="M1 2.5 L4.5 0.5 L8.5 1.5 L5 3.5Z" fill="#a0ccf6"/><path d="M1 2.5 L5 3.5 L5 10 L1 8.5Z" fill="#6aa6ea"/><path d="M2 9 L8.5 6 L12.5 8 L12.5 10.5 L6 13 L2 11Z" fill="#3f80d4"/><path d="M2 9 L8.5 6 L12.5 8 L6 11Z" fill="#a8d2fa"/><path d="M3.5 7.2 L8.5 5.2" stroke="#e8902a" stroke-width="1.3"/></svg>
<div class="t" style="left:330px;top:360px;letter-spacing:-0.03px">Reflector<span style="letter-spacing:-2px">_</span>cavity<span style="letter-spacing:-2px">_</span>027.prt</div>
<svg style="left:314px;top:379px" width="13" height="13"><path d="M1 2.5 L4.5 0.5 L8.5 1.5 L8.5 8 L5 10 L1 8.5Z" fill="#3f7fd0"/><path d="M1 2.5 L4.5 0.5 L8.5 1.5 L5 3.5Z" fill="#a0ccf6"/><path d="M1 2.5 L5 3.5 L5 10 L1 8.5Z" fill="#6aa6ea"/><path d="M2 9 L8.5 6 L12.5 8 L12.5 10.5 L6 13 L2 11Z" fill="#3f80d4"/><path d="M2 9 L8.5 6 L12.5 8 L6 11Z" fill="#a8d2fa"/><path d="M3.5 7.2 L8.5 5.2" stroke="#e8902a" stroke-width="1.3"/></svg>
<div class="t" style="left:330px;top:378px;letter-spacing:-0.03px">Reflector<span style="letter-spacing:-2px">_</span>comb-cavity<span style="letter-spacing:-2px">_</span>049.prt</div>
<svg style="left:314px;top:397px" width="13" height="13"><path d="M1 2.5 L4.5 0.5 L8.5 1.5 L8.5 8 L5 10 L1 8.5Z" fill="#3f7fd0"/><path d="M1 2.5 L4.5 0.5 L8.5 1.5 L5 3.5Z" fill="#a0ccf6"/><path d="M1 2.5 L5 3.5 L5 10 L1 8.5Z" fill="#6aa6ea"/><path d="M2 9 L8.5 6 L12.5 8 L12.5 10.5 L6 13 L2 11Z" fill="#3f80d4"/><path d="M2 9 L8.5 6 L12.5 8 L6 11Z" fill="#a8d2fa"/><path d="M3.5 7.2 L8.5 5.2" stroke="#e8902a" stroke-width="1.3"/></svg>
<div class="t" style="left:330px;top:396px;letter-spacing:-0.03px">Reflector<span style="letter-spacing:-2px">_</span>comb-core<span style="letter-spacing:-2px">_</span>041.prt</div>
<svg style="left:314px;top:415px" width="13" height="13"><path d="M1 2.5 L4.5 0.5 L8.5 1.5 L8.5 8 L5 10 L1 8.5Z" fill="#3f7fd0"/><path d="M1 2.5 L4.5 0.5 L8.5 1.5 L5 3.5Z" fill="#a0ccf6"/><path d="M1 2.5 L5 3.5 L5 10 L1 8.5Z" fill="#6aa6ea"/><path d="M2 9 L8.5 6 L12.5 8 L12.5 10.5 L6 13 L2 11Z" fill="#3f80d4"/><path d="M2 9 L8.5 6 L12.5 8 L6 11Z" fill="#a8d2fa"/><path d="M3.5 7.2 L8.5 5.2" stroke="#e8902a" stroke-width="1.3"/></svg>
<div class="t" style="left:330px;top:414px;letter-spacing:-0.03px">Reflector<span style="letter-spacing:-2px">_</span>combined<span style="letter-spacing:-2px">_</span>038.prt</div>
<svg style="left:314px;top:433px" width="13" height="13"><path d="M1 2.5 L4.5 0.5 L8.5 1.5 L8.5 8 L5 10 L1 8.5Z" fill="#3f7fd0"/><path d="M1 2.5 L4.5 0.5 L8.5 1.5 L5 3.5Z" fill="#a0ccf6"/><path d="M1 2.5 L5 3.5 L5 10 L1 8.5Z" fill="#6aa6ea"/><path d="M2 9 L8.5 6 L12.5 8 L12.5 10.5 L6 13 L2 11Z" fill="#3f80d4"/><path d="M2 9 L8.5 6 L12.5 8 L6 11Z" fill="#a8d2fa"/><path d="M3.5 7.2 L8.5 5.2" stroke="#e8902a" stroke-width="1.3"/></svg>
<div class="t" style="left:330px;top:432px;letter-spacing:-0.03px">Reflector<span style="letter-spacing:-2px">_</span>comb-wp<span style="letter-spacing:-2px">_</span>040.prt</div>
<svg style="left:314px;top:451px" width="13" height="13"><path d="M1 2.5 L4.5 0.5 L8.5 1.5 L8.5 8 L5 10 L1 8.5Z" fill="#3f7fd0"/><path d="M1 2.5 L4.5 0.5 L8.5 1.5 L5 3.5Z" fill="#a0ccf6"/><path d="M1 2.5 L5 3.5 L5 10 L1 8.5Z" fill="#6aa6ea"/><path d="M2 9 L8.5 6 L12.5 8 L12.5 10.5 L6 13 L2 11Z" fill="#3f80d4"/><path d="M2 9 L8.5 6 L12.5 8 L6 11Z" fill="#a8d2fa"/><path d="M3.5 7.2 L8.5 5.2" stroke="#e8902a" stroke-width="1.3"/></svg>
<div class="t" style="left:330px;top:450px;letter-spacing:-0.03px">Reflector<span style="letter-spacing:-2px">_</span>cool<span style="letter-spacing:-2px">_</span>026.prt</div>
<svg style="left:314px;top:469px" width="13" height="13"><path d="M1 2.5 L4.5 0.5 L8.5 1.5 L8.5 8 L5 10 L1 8.5Z" fill="#3f7fd0"/><path d="M1 2.5 L4.5 0.5 L8.5 1.5 L5 3.5Z" fill="#a0ccf6"/><path d="M1 2.5 L5 3.5 L5 10 L1 8.5Z" fill="#6aa6ea"/><path d="M2 9 L8.5 6 L12.5 8 L12.5 10.5 L6 13 L2 11Z" fill="#3f80d4"/><path d="M2 9 L8.5 6 L12.5 8 L6 11Z" fill="#a8d2fa"/><path d="M3.5 7.2 L8.5 5.2" stroke="#e8902a" stroke-width="1.3"/></svg>
<div class="t" style="left:330px;top:468px;letter-spacing:-0.03px">Reflector<span style="letter-spacing:-2px">_</span>cool<span style="letter-spacing:-2px">_</span>side<span style="letter-spacing:-2px">_</span>a<span style="letter-spacing:-2px">_</span>042.prt</div>
<svg style="left:314px;top:487px" width="13" height="13"><path d="M1 2.5 L4.5 0.5 L8.5 1.5 L8.5 8 L5 10 L1 8.5Z" fill="#3f7fd0"/><path d="M1 2.5 L4.5 0.5 L8.5 1.5 L5 3.5Z" fill="#a0ccf6"/><path d="M1 2.5 L5 3.5 L5 10 L1 8.5Z" fill="#6aa6ea"/><path d="M2 9 L8.5 6 L12.5 8 L12.5 10.5 L6 13 L2 11Z" fill="#3f80d4"/><path d="M2 9 L8.5 6 L12.5 8 L6 11Z" fill="#a8d2fa"/><path d="M3.5 7.2 L8.5 5.2" stroke="#e8902a" stroke-width="1.3"/></svg>
<div class="t" style="left:330px;top:486px;letter-spacing:-0.03px">Reflector<span style="letter-spacing:-2px">_</span>cool<span style="letter-spacing:-2px">_</span>side<span style="letter-spacing:-2px">_</span>b<span style="letter-spacing:-2px">_</span>043.prt</div>
<svg style="left:314px;top:505px" width="13" height="13"><path d="M1 2.5 L4.5 0.5 L8.5 1.5 L8.5 8 L5 10 L1 8.5Z" fill="#3f7fd0"/><path d="M1 2.5 L4.5 0.5 L8.5 1.5 L5 3.5Z" fill="#a0ccf6"/><path d="M1 2.5 L5 3.5 L5 10 L1 8.5Z" fill="#6aa6ea"/><path d="M2 9 L8.5 6 L12.5 8 L12.5 10.5 L6 13 L2 11Z" fill="#3f80d4"/><path d="M2 9 L8.5 6 L12.5 8 L6 11Z" fill="#a8d2fa"/><path d="M3.5 7.2 L8.5 5.2" stroke="#e8902a" stroke-width="1.3"/></svg>
<div class="t" style="left:330px;top:504px;letter-spacing:-0.03px">Reflector<span style="letter-spacing:-2px">_</span>core<span style="letter-spacing:-2px">_</span>031.prt</div>
<svg style="left:314px;top:523px" width="13" height="13"><path d="M1 2.5 L4.5 0.5 L8.5 1.5 L8.5 8 L5 10 L1 8.5Z" fill="#3f7fd0"/><path d="M1 2.5 L4.5 0.5 L8.5 1.5 L5 3.5Z" fill="#a0ccf6"/><path d="M1 2.5 L5 3.5 L5 10 L1 8.5Z" fill="#6aa6ea"/><path d="M2 9 L8.5 6 L12.5 8 L12.5 10.5 L6 13 L2 11Z" fill="#3f80d4"/><path d="M2 9 L8.5 6 L12.5 8 L6 11Z" fill="#a8d2fa"/><path d="M3.5 7.2 L8.5 5.2" stroke="#e8902a" stroke-width="1.3"/></svg>
<div class="t" style="left:330px;top:522px;letter-spacing:-0.03px">Reflector<span style="letter-spacing:-2px">_</span>fill<span style="letter-spacing:-2px">_</span>039.prt</div>
<svg style="left:314px;top:541px" width="13" height="13"><path d="M1 2.5 L4.5 0.5 L8.5 1.5 L8.5 8 L5 10 L1 8.5Z" fill="#3f7fd0"/><path d="M1 2.5 L4.5 0.5 L8.5 1.5 L5 3.5Z" fill="#a0ccf6"/><path d="M1 2.5 L5 3.5 L5 10 L1 8.5Z" fill="#6aa6ea"/><path d="M2 9 L8.5 6 L12.5 8 L12.5 10.5 L6 13 L2 11Z" fill="#3f80d4"/><path d="M2 9 L8.5 6 L12.5 8 L6 11Z" fill="#a8d2fa"/><path d="M3.5 7.2 L8.5 5.2" stroke="#e8902a" stroke-width="1.3"/></svg>
<div class="t" style="left:330px;top:540px;letter-spacing:-0.03px">Reflector<span style="letter-spacing:-2px">_</span>layout<span style="letter-spacing:-2px">_</span>047.prt</div>
<svg style="left:314px;top:559px" width="13" height="13"><path d="M1 2.5 L4.5 0.5 L8.5 1.5 L8.5 8 L5 10 L1 8.5Z" fill="#3f7fd0"/><path d="M1 2.5 L4.5 0.5 L8.5 1.5 L5 3.5Z" fill="#a0ccf6"/><path d="M1 2.5 L5 3.5 L5 10 L1 8.5Z" fill="#6aa6ea"/><path d="M2 9 L8.5 6 L12.5 8 L12.5 10.5 L6 13 L2 11Z" fill="#3f80d4"/><path d="M2 9 L8.5 6 L12.5 8 L6 11Z" fill="#a8d2fa"/><path d="M3.5 7.2 L8.5 5.2" stroke="#e8902a" stroke-width="1.3"/></svg>
<div class="t" style="left:330px;top:558px;letter-spacing:-0.03px">Reflector<span style="letter-spacing:-2px">_</span>misc<span style="letter-spacing:-2px">_</span>030.prt</div>
<svg style="left:314px;top:577px" width="13" height="13"><path d="M1 2.5 L4.5 0.5 L8.5 1.5 L8.5 8 L5 10 L1 8.5Z" fill="#3f7fd0"/><path d="M1 2.5 L4.5 0.5 L8.5 1.5 L5 3.5Z" fill="#a0ccf6"/><path d="M1 2.5 L5 3.5 L5 10 L1 8.5Z" fill="#6aa6ea"/><path d="M2 9 L8.5 6 L12.5 8 L12.5 10.5 L6 13 L2 11Z" fill="#3f80d4"/><path d="M2 9 L8.5 6 L12.5 8 L6 11Z" fill="#a8d2fa"/><path d="M3.5 7.2 L8.5 5.2" stroke="#e8902a" stroke-width="1.3"/></svg>
<div class="t" style="left:330px;top:576px;letter-spacing:-0.03px">Reflector<span style="letter-spacing:-2px">_</span>misc<span style="letter-spacing:-2px">_</span>side<span style="letter-spacing:-2px">_</span>a<span style="letter-spacing:-2px">_</span>044.prt</div>
<svg style="left:314px;top:595px" width="13" height="13"><path d="M1 2.5 L4.5 0.5 L8.5 1.5 L8.5 8 L5 10 L1 8.5Z" fill="#3f7fd0"/><path d="M1 2.5 L4.5 0.5 L8.5 1.5 L5 3.5Z" fill="#a0ccf6"/><path d="M1 2.5 L5 3.5 L5 10 L1 8.5Z" fill="#6aa6ea"/><path d="M2 9 L8.5 6 L12.5 8 L12.5 10.5 L6 13 L2 11Z" fill="#3f80d4"/><path d="M2 9 L8.5 6 L12.5 8 L6 11Z" fill="#a8d2fa"/><path d="M3.5 7.2 L8.5 5.2" stroke="#e8902a" stroke-width="1.3"/></svg>
<div class="t" style="left:330px;top:594px;letter-spacing:-0.03px">Reflector<span style="letter-spacing:-2px">_</span>misc<span style="letter-spacing:-2px">_</span>side<span style="letter-spacing:-2px">_</span>b<span style="letter-spacing:-2px">_</span>045.prt</div>
<svg style="left:314px;top:613px" width="13" height="13"><path d="M1 2.5 L4.5 0.5 L8.5 1.5 L8.5 8 L5 10 L1 8.5Z" fill="#3f7fd0"/><path d="M1 2.5 L4.5 0.5 L8.5 1.5 L5 3.5Z" fill="#a0ccf6"/><path d="M1 2.5 L5 3.5 L5 10 L1 8.5Z" fill="#6aa6ea"/><path d="M2 9 L8.5 6 L12.5 8 L12.5 10.5 L6 13 L2 11Z" fill="#3f80d4"/><path d="M2 9 L8.5 6 L12.5 8 L6 11Z" fill="#a8d2fa"/><path d="M3.5 7.2 L8.5 5.2" stroke="#e8902a" stroke-width="1.3"/></svg>
<div class="t" style="left:330px;top:612px;letter-spacing:-0.03px">Reflector<span style="letter-spacing:-2px">_</span>molding<span style="letter-spacing:-2px">_</span>050.prt</div>
<svg style="left:314px;top:631px" width="13" height="13"><path d="M1 2.5 L4.5 0.5 L8.5 1.5 L8.5 8 L5 10 L1 8.5Z" fill="#3f7fd0"/><path d="M1 2.5 L4.5 0.5 L8.5 1.5 L5 3.5Z" fill="#a0ccf6"/><path d="M1 2.5 L5 3.5 L5 10 L1 8.5Z" fill="#6aa6ea"/><path d="M2 9 L8.5 6 L12.5 8 L12.5 10.5 L6 13 L2 11Z" fill="#3f80d4"/><path d="M2 9 L8.5 6 L12.5 8 L6 11Z" fill="#a8d2fa"/><path d="M3.5 7.2 L8.5 5.2" stroke="#e8902a" stroke-width="1.3"/></svg>
<div class="t" style="left:330px;top:630px;letter-spacing:-0.03px">Reflector<span style="letter-spacing:-2px">_</span>parting<span style="letter-spacing:-2px">_</span>023.prt</div>
<svg style="left:314px;top:649px" width="13" height="13"><path d="M1 2.5 L4.5 0.5 L8.5 1.5 L8.5 8 L5 10 L1 8.5Z" fill="#3f7fd0"/><path d="M1 2.5 L4.5 0.5 L8.5 1.5 L5 3.5Z" fill="#a0ccf6"/><path d="M1 2.5 L5 3.5 L5 10 L1 8.5Z" fill="#6aa6ea"/><path d="M2 9 L8.5 6 L12.5 8 L12.5 10.5 L6 13 L2 11Z" fill="#3f80d4"/><path d="M2 9 L8.5 6 L12.5 8 L6 11Z" fill="#a8d2fa"/><path d="M3.5 7.2 L8.5 5.2" stroke="#e8902a" stroke-width="1.3"/></svg>
<div class="t" style="left:330px;top:648px;letter-spacing:-0.03px">Reflector<span style="letter-spacing:-2px">_</span>parting<span style="letter-spacing:-2px">_</span>048.prt</div>
<svg style="left:314px;top:667px" width="13" height="13"><path d="M1 2.5 L4.5 0.5 L8.5 1.5 L8.5 8 L5 10 L1 8.5Z" fill="#3f7fd0"/><path d="M1 2.5 L4.5 0.5 L8.5 1.5 L5 3.5Z" fill="#a0ccf6"/><path d="M1 2.5 L5 3.5 L5 10 L1 8.5Z" fill="#6aa6ea"/><path d="M2 9 L8.5 6 L12.5 8 L12.5 10.5 L6 13 L2 11Z" fill="#3f80d4"/><path d="M2 9 L8.5 6 L12.5 8 L6 11Z" fill="#a8d2fa"/><path d="M3.5 7.2 L8.5 5.2" stroke="#e8902a" stroke-width="1.3"/></svg>
<div class="t" style="left:330px;top:666px;letter-spacing:-0.03px">Reflector<span style="letter-spacing:-2px">_</span>parting-set<span style="letter-spacing:-2px">_</span>046.prt</div>
<svg style="left:314px;top:685px" width="13" height="13"><path d="M1 2.5 L4.5 0.5 L8.5 1.5 L8.5 8 L5 10 L1 8.5Z" fill="#3f7fd0"/><path d="M1 2.5 L4.5 0.5 L8.5 1.5 L5 3.5Z" fill="#a0ccf6"/><path d="M1 2.5 L5 3.5 L5 10 L1 8.5Z" fill="#6aa6ea"/><path d="M2 9 L8.5 6 L12.5 8 L12.5 10.5 L6 13 L2 11Z" fill="#3f80d4"/><path d="M2 9 L8.5 6 L12.5 8 L6 11Z" fill="#a8d2fa"/><path d="M3.5 7.2 L8.5 5.2" stroke="#e8902a" stroke-width="1.3"/></svg>
<div class="t" style="left:330px;top:684px;letter-spacing:-0.03px">Reflector<span style="letter-spacing:-2px">_</span>prod<span style="letter-spacing:-2px">_</span>028.prt</div>
<svg style="left:314px;top:703px" width="13" height="13"><path d="M1 2.5 L4.5 0.5 L8.5 1.5 L8.5 8 L5 10 L1 8.5Z" fill="#3f7fd0"/><path d="M1 2.5 L4.5 0.5 L8.5 1.5 L5 3.5Z" fill="#a0ccf6"/><path d="M1 2.5 L5 3.5 L5 10 L1 8.5Z" fill="#6aa6ea"/><path d="M2 9 L8.5 6 L12.5 8 L12.5 10.5 L6 13 L2 11Z" fill="#3f80d4"/><path d="M2 9 L8.5 6 L12.5 8 L6 11Z" fill="#a8d2fa"/><path d="M3.5 7.2 L8.5 5.2" stroke="#e8902a" stroke-width="1.3"/></svg>
<div class="t" style="left:330px;top:702px;letter-spacing:-0.03px">Reflector<span style="letter-spacing:-2px">_</span>prod<span style="letter-spacing:-2px">_</span>side<span style="letter-spacing:-2px">_</span>a<span style="letter-spacing:-2px">_</span>032.prt</div>
<svg style="left:314px;top:721px" width="13" height="13"><path d="M1 2.5 L4.5 0.5 L8.5 1.5 L8.5 8 L5 10 L1 8.5Z" fill="#3f7fd0"/><path d="M1 2.5 L4.5 0.5 L8.5 1.5 L5 3.5Z" fill="#a0ccf6"/><path d="M1 2.5 L5 3.5 L5 10 L1 8.5Z" fill="#6aa6ea"/><path d="M2 9 L8.5 6 L12.5 8 L12.5 10.5 L6 13 L2 11Z" fill="#3f80d4"/><path d="M2 9 L8.5 6 L12.5 8 L6 11Z" fill="#a8d2fa"/><path d="M3.5 7.2 L8.5 5.2" stroke="#e8902a" stroke-width="1.3"/></svg>
<div class="t" style="left:330px;top:720px;letter-spacing:-0.03px">Reflector<span style="letter-spacing:-2px">_</span>prod<span style="letter-spacing:-2px">_</span>side<span style="letter-spacing:-2px">_</span>b<span style="letter-spacing:-2px">_</span>033.prt</div>
<svg style="left:314px;top:739px" width="13" height="13"><path d="M1 2.5 L4.5 0.5 L8.5 1.5 L8.5 8 L5 10 L1 8.5Z" fill="#3f7fd0"/><path d="M1 2.5 L4.5 0.5 L8.5 1.5 L5 3.5Z" fill="#a0ccf6"/><path d="M1 2.5 L5 3.5 L5 10 L1 8.5Z" fill="#6aa6ea"/><path d="M2 9 L8.5 6 L12.5 8 L12.5 10.5 L6 13 L2 11Z" fill="#3f80d4"/><path d="M2 9 L8.5 6 L12.5 8 L6 11Z" fill="#a8d2fa"/><path d="M3.5 7.2 L8.5 5.2" stroke="#e8902a" stroke-width="1.3"/></svg>
<div class="t" style="left:330px;top:738px;letter-spacing:-0.03px">Reflector<span style="letter-spacing:-2px">_</span>shrink<span style="letter-spacing:-2px">_</span>029.prt</div>
<svg style="left:314px;top:757px" width="13" height="13"><path d="M1 2.5 L4.5 0.5 L8.5 1.5 L8.5 8 L5 10 L1 8.5Z" fill="#3f7fd0"/><path d="M1 2.5 L4.5 0.5 L8.5 1.5 L5 3.5Z" fill="#a0ccf6"/><path d="M1 2.5 L5 3.5 L5 10 L1 8.5Z" fill="#6aa6ea"/><path d="M2 9 L8.5 6 L12.5 8 L12.5 10.5 L6 13 L2 11Z" fill="#3f80d4"/><path d="M2 9 L8.5 6 L12.5 8 L6 11Z" fill="#a8d2fa"/><path d="M3.5 7.2 L8.5 5.2" stroke="#e8902a" stroke-width="1.3"/></svg>
<div class="t" style="left:330px;top:756px;letter-spacing:-0.03px">Reflector<span style="letter-spacing:-2px">_</span>top<span style="letter-spacing:-2px">_</span>035.prt</div>
<svg style="left:314px;top:775px" width="13" height="13"><path d="M1 2.5 L4.5 0.5 L8.5 1.5 L8.5 8 L5 10 L1 8.5Z" fill="#3f7fd0"/><path d="M1 2.5 L4.5 0.5 L8.5 1.5 L5 3.5Z" fill="#a0ccf6"/><path d="M1 2.5 L5 3.5 L5 10 L1 8.5Z" fill="#6aa6ea"/><path d="M2 9 L8.5 6 L12.5 8 L12.5 10.5 L6 13 L2 11Z" fill="#3f80d4"/><path d="M2 9 L8.5 6 L12.5 8 L6 11Z" fill="#a8d2fa"/><path d="M3.5 7.2 L8.5 5.2" stroke="#e8902a" stroke-width="1.3"/></svg>
<div class="t" style="left:330px;top:774px;letter-spacing:-0.03px">Reflector<span style="letter-spacing:-2px">_</span>trim<span style="letter-spacing:-2px">_</span>037.prt</div>
<svg style="left:314px;top:793px" width="13" height="13"><path d="M1 2.5 L4.5 0.5 L8.5 1.5 L8.5 8 L5 10 L1 8.5Z" fill="#3f7fd0"/><path d="M1 2.5 L4.5 0.5 L8.5 1.5 L5 3.5Z" fill="#a0ccf6"/><path d="M1 2.5 L5 3.5 L5 10 L1 8.5Z" fill="#6aa6ea"/><path d="M2 9 L8.5 6 L12.5 8 L12.5 10.5 L6 13 L2 11Z" fill="#3f80d4"/><path d="M2 9 L8.5 6 L12.5 8 L6 11Z" fill="#a8d2fa"/><path d="M3.5 7.2 L8.5 5.2" stroke="#e8902a" stroke-width="1.3"/></svg>
<div class="t" style="left:330px;top:792px;letter-spacing:-0.03px">Reflector<span style="letter-spacing:-2px">_</span>var<span style="letter-spacing:-2px">_</span>036.prt</div>
<svg style="left:314px;top:811px" width="13" height="13"><path d="M1 2.5 L4.5 0.5 L8.5 1.5 L8.5 8 L5 10 L1 8.5Z" fill="#3f7fd0"/><path d="M1 2.5 L4.5 0.5 L8.5 1.5 L5 3.5Z" fill="#a0ccf6"/><path d="M1 2.5 L5 3.5 L5 10 L1 8.5Z" fill="#6aa6ea"/><path d="M2 9 L8.5 6 L12.5 8 L12.5 10.5 L6 13 L2 11Z" fill="#3f80d4"/><path d="M2 9 L8.5 6 L12.5 8 L6 11Z" fill="#a8d2fa"/><path d="M3.5 7.2 L8.5 5.2" stroke="#e8902a" stroke-width="1.3"/></svg>
<div class="t" style="left:330px;top:810px;letter-spacing:-0.03px">Reflector<span style="letter-spacing:-2px">_</span>workpiece<span style="letter-spacing:-2px">_</span>034.prt</div>
<div class="t" style="left:309px;top:870px;">File Name:</div>
<div class="inp" style="left:371px;top:866px;width:412px;height:22px;"></div>
<div class="t" style="left:309px;top:903px;">File Type:</div>
<div class="inp" style="left:371px;top:899px;width:412px;height:22px;"></div>
<div style="left:765px;top:900px;width:17px;height:20px;border:1px solid #8e8f8f;border-radius:2px;background:linear-gradient(#f3f3f3,#e4e4e4 50%,#d4d4d4 51%,#cfcfcf)"></div><svg style="left:769px;top:908px" width="9" height="5"><path d="M0 0 L9 0 L4.5 5Z" fill="#000"/></svg>
<div class="t" style="left:376px;top:903px;">Unigraphics Files(*.part *.prt)</div>
<div style="left:804px;top:864px;width:80px;height:26px;border:1px solid #3c7fb1;border-radius:3px;box-shadow:inset 0 0 0 1px #61d5f9;background:linear-gradient(#eaf6fd 0,#d9f0fc 45%,#bee6fd 50%,#a7d9f5 100%)"></div>
<div style="left:804px;top:864px;width:80px;height:26px;border:1px solid #3c7fb1;border-radius:3px;box-shadow:inset 0 0 0 2px #8ee0fb;background:linear-gradient(#f2f2f2 0%,#ebebeb 45%,#dddddd 50%,#cfcfcf 100%)"></div>
<div class="t" style="left:829px;top:870px;">Open</div>
<div class="btn" style="left:804px;top:897px;width:80px;height:26px;"></div>
<div class="t" style="left:826px;top:903px;">Cancel</div>
<div class="chk" style="left:897px;top:331px;width:13px;height:13px;"></div><svg style="left:897px;top:331px" width="13" height="13"><path d="M3 6.5 L5.5 10 L10 2.5" stroke="#3a4aa0" stroke-width="1.6" fill="none"/></svg>
<div class="t" style="left:916px;top:330px;">Display workzone informations</div>
<div style="left:911px;top:352px;width:159px;height:149px;border:2px solid #a0a0a0;border-right:1px solid #fff;border-bottom:1px solid #fff;background:#f0f0f0"></div>
<div style="left:913px;top:353px;width:155px;height:18px;overflow:hidden"><div class="t b" style="left:2px;top:3px;font-size:13px">C:/Jobs/parts_to_cut/headlight/</div></div>
<div style="left:913px;top:391px;width:155px;height:2px;background:#a8a8a8;border-bottom:1px solid #fff"></div>
<div class="t" style="left:935px;top:414px;color:#e0202a;font-style:italic">No Preview available.</div>
<div style="left:913px;top:449px;width:155px;height:2px;background:#a8a8a8;border-bottom:1px solid #fff"></div>
<div style="left:913px;top:456px;width:155px;height:30px;overflow:hidden"><div class="t" style="left:2px;top:0px;"><b>Path:</b> C:/Jobs/parts_to_cut/headlight/</div><div class="t b" style="left:5px;top:16px;">Directory</div></div>
<div class="btn" style="left:898px;top:813px;width:186px;height:26px;"></div>
<div class="t" style="left:941px;top:819px;">Set Default Paths...</div>
<div class="chk" style="left:897px;top:848px;width:13px;height:13px;"></div><svg style="left:897px;top:848px" width="13" height="13"><path d="M3 6.5 L5.5 10 L10 2.5" stroke="#3a4aa0" stroke-width="1.6" fill="none"/></svg>
<div class="t" style="left:916px;top:847px;">Use Default Paths</div>
<div class="chk" style="left:897px;top:873px;width:13px;height:13px;"></div><svg style="left:897px;top:873px" width="13" height="13"><path d="M3 6.5 L5.5 10 L10 2.5" stroke="#3a4aa0" stroke-width="1.6" fill="none"/></svg>
<div class="t" style="left:916px;top:872px;">New Direct Interface</div>
<svg style="left:1080px;top:922px" width="10" height="10"><g fill="#b0b0b0"><rect x="7" y="1" width="1.5" height="1.5"/><rect x="4" y="4" width="1.5" height="1.5"/><rect x="7" y="4" width="1.5" height="1.5"/><rect x="1" y="7" width="1.5" height="1.5"/><rect x="4" y="7" width="1.5" height="1.5"/><rect x="7" y="7" width="1.5" height="1.5"/></g></svg></body></html>
